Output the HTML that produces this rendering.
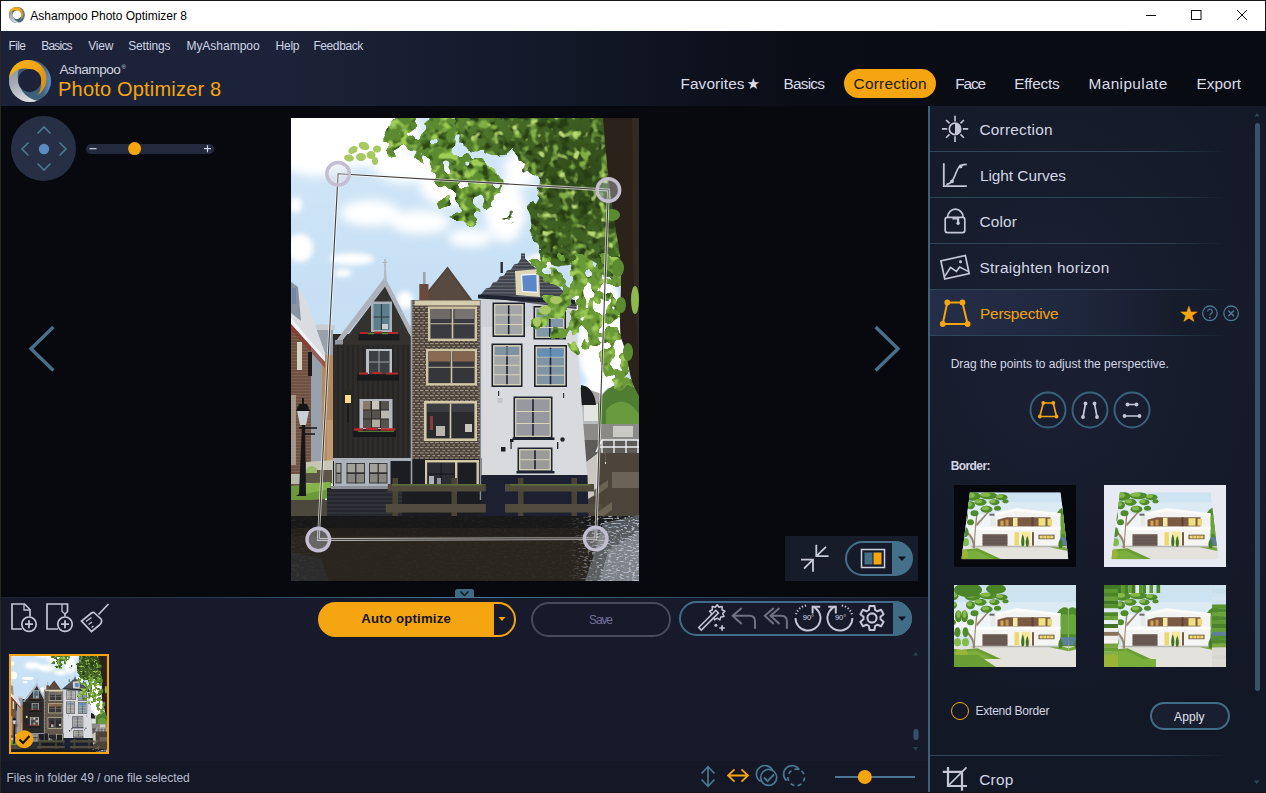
<!DOCTYPE html>
<html lang="en">
<head>
<meta charset="utf-8">
<title>Ashampoo Photo Optimizer 8</title>
<style>
*{box-sizing:border-box;margin:0;padding:0}
html,body{width:1266px;height:793px;overflow:hidden;background:#07090f}
body{font-family:"Liberation Sans","DejaVu Sans",sans-serif;color:#d3d6e4;position:relative}
.abs{position:absolute}
svg{position:absolute;overflow:visible}
.t{position:absolute;white-space:nowrap;line-height:1}
#titlebar{left:0;top:0;width:1266px;height:31px;background:#fff;border-top:1px solid #15161a;border-left:1px solid #15161a;border-right:1px solid #15161a}
#menubar{left:0;top:31px;width:1266px;height:29px;background:linear-gradient(90deg,#1c2338 0,#1c2338 280px,#141a2b 520px,#0b0d16 800px,#090b12 100%)}
#header{left:0;top:60px;width:1266px;height:46px;background:linear-gradient(90deg,#1c2338 0,#1c2338 280px,#141a2b 520px,#0b0d16 800px,#090b12 100%)}
#canvas{left:0;top:106px;width:928px;height:491px;background:#07090f}
#toolbar{left:0;top:597px;width:928px;height:164px;background:#161a2a}
#status{left:0;top:761px;width:928px;height:32px;background:#131726}
#side{left:928px;top:106px;width:338px;height:687px;background:radial-gradient(ellipse 300px 420px at 120px 230px,#1a2033 0,#161b2b 60%,#131827 100%);border-left:2px solid #3d6178}
.sep{position:absolute;left:930px;width:296px;height:1px;background:linear-gradient(90deg,#2c4658 0,#2c4658 75%,rgba(44,70,88,0) 100%)}
</style>
</head>
<body>
<!-- ===== title bar ===== -->
<div id="titlebar" class="abs"></div>
<svg style="left:9px;top:6.8px" width="16" height="16" viewBox="0 0 42 42">
  <defs>
    <linearGradient id="lgGa" x1="0" y1="0" x2="0.4" y2="1"><stop offset="0" stop-color="#7d8390"/><stop offset="0.55" stop-color="#a9adb8"/><stop offset="1" stop-color="#dcdde2"/></linearGradient>
    <linearGradient id="lgOa" x1="0" y1="0" x2="1" y2="0.5"><stop offset="0" stop-color="#fbb414"/><stop offset="0.6" stop-color="#f0a418"/><stop offset="1" stop-color="#d08a1c"/></linearGradient>
    <linearGradient id="lgBa" x1="0" y1="0" x2="1" y2="0"><stop offset="0" stop-color="#38566b"/><stop offset="0.8" stop-color="#3f627c"/><stop offset="1" stop-color="#5f93cc"/></linearGradient>
    <clipPath id="cOa"><circle cx="18.85" cy="18.85" r="18.85"/></clipPath>
    <mask id="mOa"><rect width="42" height="42" fill="#fff"/><circle cx="15.5" cy="25" r="16.5" fill="#000"/></mask>
    <mask id="mGa"><rect width="42" height="42" fill="#fff"/><circle cx="33.5" cy="16.7" r="24.8" fill="#000"/></mask>
  </defs>
  <circle cx="21" cy="21" r="21" fill="url(#lgBa)"/>
  <circle cx="21" cy="21" r="21" fill="url(#lgGa)" mask="url(#mGa)"/>
  <g clip-path="url(#cOa)"><rect width="42" height="42" fill="url(#lgOa)" mask="url(#mOa)"/></g>
  <circle cx="20.7" cy="20.4" r="11.5" fill="#fff"/>
</svg>
<span class="t" style="left:30.3px;top:9.8px;font-size:12px;color:#000;letter-spacing:0.00px;">Ashampoo Photo Optimizer 8</span>
<svg style="left:1140px;top:0" width="126" height="31" viewBox="0 0 126 31" fill="none" stroke="#111" stroke-width="1">
  <path d="M6 15.5h10"/>
  <rect x="51.5" y="10.5" width="9.5" height="9"/>
  <path d="M97 10l10 10M107 10l-10 10"/>
</svg>

<!-- ===== menu bar ===== -->
<div id="menubar" class="abs"></div>
<span class="t" style="left:8.5px;top:39.8px;font-size:12px;color:#cfd3e6;letter-spacing:-0.61px;">File</span>
<span class="t" style="left:41.3px;top:39.8px;font-size:12px;color:#cfd3e6;letter-spacing:-0.81px;">Basics</span>
<span class="t" style="left:88.3px;top:39.8px;font-size:12px;color:#cfd3e6;letter-spacing:-0.23px;">View</span>
<span class="t" style="left:128.2px;top:39.8px;font-size:12px;color:#cfd3e6;letter-spacing:-0.14px;">Settings</span>
<span class="t" style="left:186.4px;top:39.8px;font-size:12px;color:#cfd3e6;letter-spacing:-0.01px;">MyAshampoo</span>
<span class="t" style="left:275.5px;top:39.8px;font-size:12px;color:#cfd3e6;letter-spacing:-0.23px;">Help</span>
<span class="t" style="left:313.4px;top:39.8px;font-size:12px;color:#cfd3e6;letter-spacing:-0.40px;">Feedback</span>

<!-- ===== header ===== -->
<div id="header" class="abs"></div>
<svg style="left:8.85px;top:59.9px" width="42" height="42" viewBox="0 0 42 42">
  <defs>
    <linearGradient id="lgGb" x1="0" y1="0" x2="0.4" y2="1"><stop offset="0" stop-color="#7d8390"/><stop offset="0.55" stop-color="#a9adb8"/><stop offset="1" stop-color="#dcdde2"/></linearGradient>
    <linearGradient id="lgOb" x1="0" y1="0" x2="1" y2="0.5"><stop offset="0" stop-color="#fbb414"/><stop offset="0.6" stop-color="#f0a418"/><stop offset="1" stop-color="#d08a1c"/></linearGradient>
    <linearGradient id="lgBb" x1="0" y1="0" x2="1" y2="0"><stop offset="0" stop-color="#38566b"/><stop offset="0.8" stop-color="#3f627c"/><stop offset="1" stop-color="#5f93cc"/></linearGradient>
    <clipPath id="cOb"><circle cx="18.85" cy="18.85" r="18.85"/></clipPath>
    <mask id="mOb"><rect width="42" height="42" fill="#fff"/><circle cx="15.5" cy="25" r="16.5" fill="#000"/></mask>
    <mask id="mGb"><rect width="42" height="42" fill="#fff"/><circle cx="33.5" cy="16.7" r="24.8" fill="#000"/></mask>
  </defs>
  <circle cx="21" cy="21" r="21" fill="url(#lgBb)"/>
  <circle cx="21" cy="21" r="21" fill="url(#lgGb)" mask="url(#mGb)"/>
  <g clip-path="url(#cOb)"><rect width="42" height="42" fill="url(#lgOb)" mask="url(#mOb)"/></g>
  <circle cx="20.7" cy="20.4" r="11.5" fill="#1c2338"/>
</svg>
<span class="t" style="left:59.4px;top:63.1px;font-size:13.6px;color:#d0d3e0;letter-spacing:-0.51px;">Ashampoo</span>
<span class="t" style="left:121.5px;top:64.4px;font-size:6px;color:#d0d3e0;letter-spacing:0.48px;">®</span>
<span class="t" style="left:58.1px;top:78.9px;font-size:20px;color:#f5a50f;letter-spacing:0.19px;">Photo Optimizer 8</span>
<div class="abs" style="left:844px;top:68.5px;width:92px;height:29.5px;border-radius:15px;background:#f5a50f"></div>
<span class="t" style="left:680.4px;top:75.7px;font-size:15.4px;color:#d9dbe8;letter-spacing:0.11px;">Favorites</span>
<span class="t" style="left:746.4px;top:76.0px;font-size:15.2px;color:#d9dbe8;letter-spacing:0.00px;">★</span>
<span class="t" style="left:783.5px;top:75.7px;font-size:15.4px;color:#d9dbe8;letter-spacing:-0.78px;">Basics</span>
<span class="t" style="left:853.6px;top:75.7px;font-size:15.4px;color:#1b1b22;letter-spacing:0.23px;">Correction</span>
<span class="t" style="left:955.3px;top:75.7px;font-size:15.4px;color:#d9dbe8;letter-spacing:-1.19px;">Face</span>
<span class="t" style="left:1014.2px;top:75.7px;font-size:15.4px;color:#d9dbe8;letter-spacing:-0.19px;">Effects</span>
<span class="t" style="left:1088.5px;top:75.7px;font-size:15.4px;color:#d9dbe8;letter-spacing:0.39px;">Manipulate</span>
<span class="t" style="left:1196.4px;top:75.7px;font-size:15.4px;color:#d9dbe8;letter-spacing:0.05px;">Export</span>
<!-- ===== canvas ===== -->
<div id="canvas" class="abs"></div>
<!-- pan pad -->
<div class="abs" style="left:11px;top:116px;width:65px;height:65px;border-radius:50%;background:#272f44"></div>
<svg style="left:11px;top:116px" width="65" height="65" viewBox="0 0 65 65" fill="none" stroke="#4a7a90" stroke-width="1.6">
  <circle cx="33" cy="33" r="5.2" fill="#5a8cc0" stroke="none"/>
  <path d="M26.5 17.5l6.5-6.5 6.5 6.5"/>
  <path d="M26.5 47.5l6.5 6.5 6.5-6.5"/>
  <path d="M17.5 26.5l-6.5 6.5 6.5 6.5"/>
  <path d="M48.5 26.5l6.5 6.5-6.5 6.5"/>
</svg>
<!-- zoom slider -->
<div class="abs" style="left:86px;top:144px;width:128px;height:9.5px;border-radius:5px;background:#232a3d"></div>
<svg style="left:86px;top:140px" width="130" height="18" viewBox="0 0 130 18">
  <path d="M3.5 8.7h7" stroke="#d0d2de" stroke-width="1.2"/>
  <path d="M118 8.7h7M121.5 5.2v7" stroke="#d0d2de" stroke-width="1.2"/>
  <circle cx="48.6" cy="8.6" r="6.5" fill="#f5a50f"/>
</svg>
<!-- nav arrows -->
<svg style="left:20px;top:320px" width="40" height="58" viewBox="20 320 40 58" fill="none" stroke="#4a6f88" stroke-width="3.4">
  <path d="M53.4 327L31 348.8 53.4 370.5"/>
</svg>
<svg style="left:870px;top:320px" width="40" height="58" viewBox="870 320 40 58" fill="none" stroke="#4a6f88" stroke-width="3.4">
  <path d="M875.6 327L898 348.8 875.6 370.5"/>
</svg>
<!-- PHOTO -->
<svg style="left:291px;top:118px" width="348" height="463" viewBox="291 118 348 463"><defs>
<linearGradient id="psky" x1="0" y1="0" x2="0" y2="1"><stop offset="0" stop-color="#d3e8f8"/><stop offset="0.45" stop-color="#c6dff4"/><stop offset="1" stop-color="#d6e9f7"/></linearGradient>
<filter id="pcl" x="-20%" y="-20%" width="140%" height="140%"><feGaussianBlur stdDeviation="5"/></filter>
<filter id="pcl2" x="-20%" y="-20%" width="140%" height="140%"><feGaussianBlur stdDeviation="2.5"/></filter>
<filter id="plf" x="-10%" y="-10%" width="120%" height="120%" color-interpolation-filters="sRGB">
<feTurbulence type="fractalNoise" baseFrequency="0.075" numOctaves="2" seed="11" result="n"/>
<feDisplacementMap in="SourceGraphic" in2="n" scale="12" xChannelSelector="R" yChannelSelector="G" result="d0"/>
<feTurbulence type="fractalNoise" baseFrequency="0.10" numOctaves="2" seed="4" result="n2"/>
<feGaussianBlur in="d0" stdDeviation="9" result="db"/>
<feColorMatrix in="n" type="matrix" values="0 0 0 0 1  0 0 0 0 1  0 0 0 0 1  0 0 3 0 -1" result="nb"/>
<feComposite in="db" in2="nb" operator="arithmetic" k1="0" k2="2.1" k3="-1.0" k4="0" result="v"/>
<feComponentTransfer in="v" result="msk"><feFuncA type="linear" slope="9" intercept="-3.6"/></feComponentTransfer>
<feComposite in="d0" in2="msk" operator="in" result="d"/>
<feColorMatrix in="n2" type="matrix" values="0 0 0 0 0.50  0 0 0 0 0.68  0 0 0 0 0.27  5 0 0 0 -2.75" result="lt"/>
<feComposite in="lt" in2="d" operator="in" result="ltin"/>
<feColorMatrix in="n2" type="matrix" values="0 0 0 0 0.15  0 0 0 0 0.24  0 0 0 0 0.08  0 5 0 0 -2.45" result="dk"/>
<feComposite in="dk" in2="d" operator="in" result="dkin"/>
<feColorMatrix in="n2" type="matrix" values="0 0 0 0 0.72  0 0 0 0 0.85  0 0 0 0 0.45  0 0 6 0 -3.7" result="hl"/>
<feComposite in="hl" in2="d" operator="in" result="hlin"/>
<feMerge><feMergeNode in="d"/><feMergeNode in="dkin"/><feMergeNode in="ltin"/><feMergeNode in="hlin"/></feMerge>
</filter>
<filter id="plf2" x="-10%" y="-10%" width="120%" height="120%" color-interpolation-filters="sRGB">
<feTurbulence type="fractalNoise" baseFrequency="0.07" numOctaves="2" seed="23" result="n"/>
<feDisplacementMap in="SourceGraphic" in2="n" scale="12" xChannelSelector="R" yChannelSelector="G" result="d0"/>
<feTurbulence type="fractalNoise" baseFrequency="0.10" numOctaves="2" seed="9" result="n2"/>
<feGaussianBlur in="d0" stdDeviation="7" result="db"/>
<feColorMatrix in="n" type="matrix" values="0 0 0 0 1  0 0 0 0 1  0 0 0 0 1  0 0 3 0 -1" result="nb"/>
<feComposite in="db" in2="nb" operator="arithmetic" k1="0" k2="2.1" k3="-2.7" k4="0" result="v"/>
<feComponentTransfer in="v" result="msk"><feFuncA type="linear" slope="9" intercept="-3.6"/></feComponentTransfer>
<feComposite in="d0" in2="msk" operator="in" result="d"/>
<feColorMatrix in="n2" type="matrix" values="0 0 0 0 0.62  0 0 0 0 0.80  0 0 0 0 0.33  5 0 0 0 -2.5" result="lt"/>
<feComposite in="lt" in2="d" operator="in" result="ltin"/>
<feColorMatrix in="n2" type="matrix" values="0 0 0 0 0.22  0 0 0 0 0.36  0 0 0 0 0.10  0 5 0 0 -2.7" result="dk"/>
<feComposite in="dk" in2="d" operator="in" result="dkin"/>
<feMerge><feMergeNode in="d"/><feMergeNode in="dkin"/><feMergeNode in="ltin"/></feMerge>
</filter>
<filter id="plf3" x="-10%" y="-10%" width="120%" height="120%" color-interpolation-filters="sRGB">
<feTurbulence type="fractalNoise" baseFrequency="0.07" numOctaves="2" seed="31" result="n"/>
<feDisplacementMap in="SourceGraphic" in2="n" scale="12" xChannelSelector="R" yChannelSelector="G" result="d0"/>
<feTurbulence type="fractalNoise" baseFrequency="0.10" numOctaves="2" seed="14" result="n2"/>
<feGaussianBlur in="d0" stdDeviation="7" result="db"/>
<feColorMatrix in="n" type="matrix" values="0 0 0 0 1  0 0 0 0 1  0 0 0 0 1  0 0 3 0 -1" result="nb"/>
<feComposite in="db" in2="nb" operator="arithmetic" k1="0" k2="2.1" k3="-2.0" k4="0" result="v"/>
<feComponentTransfer in="v" result="msk"><feFuncA type="linear" slope="9" intercept="-3.6"/></feComponentTransfer>
<feComposite in="d0" in2="msk" operator="in" result="d"/>
<feColorMatrix in="n2" type="matrix" values="0 0 0 0 0.62  0 0 0 0 0.80  0 0 0 0 0.33  5 0 0 0 -2.5" result="lt"/>
<feComposite in="lt" in2="d" operator="in" result="ltin"/>
<feColorMatrix in="n2" type="matrix" values="0 0 0 0 0.17  0 0 0 0 0.28  0 0 0 0 0.08  0 5 0 0 -2.5" result="dk"/>
<feComposite in="dk" in2="d" operator="in" result="dkin"/>
<feMerge><feMergeNode in="d"/><feMergeNode in="dkin"/><feMergeNode in="ltin"/></feMerge>
</filter>
<radialGradient id="pcg" gradientUnits="userSpaceOnUse" cx="585" cy="175" r="190"><stop offset="0" stop-color="#2e471a"/><stop offset="0.5" stop-color="#486e27"/><stop offset="1" stop-color="#6d9a3b"/></radialGradient>
<filter id="pwt" x="0" y="0" width="100%" height="100%" color-interpolation-filters="sRGB">
<feTurbulence type="fractalNoise" baseFrequency="0.25 0.6" numOctaves="2" seed="5" result="n"/>
<feColorMatrix in="n" type="matrix" values="0 0 0 0 0.78  0 0 0 0 0.83  0 0 0 0 0.90  5 0 0 0 -2.6" result="sp"/>
<feComposite in="sp" in2="SourceGraphic" operator="in"/>
</filter>
<linearGradient id="pwg" x1="0" y1="0" x2="1" y2="0"><stop offset="0" stop-color="#fff" stop-opacity="0.07"/><stop offset="0.1" stop-color="#fff" stop-opacity="0.015"/><stop offset="0.8" stop-color="#fff" stop-opacity="0.04"/><stop offset="0.9" stop-color="#fff" stop-opacity="0.8"/><stop offset="1" stop-color="#fff" stop-opacity="1"/></linearGradient>
<pattern id="pbr" width="5" height="5.2" patternUnits="userSpaceOnUse"><rect width="5" height="5.2" fill="#4e4339"/><rect y="0" width="3.600" height="1" fill="#a89f92"/><rect x="2.500" y="2.600" width="3.600" height="1" fill="#a89f92"/><rect x="-1.100" y="2.600" width="1.200" height="1" fill="#a89f92"/></pattern>
<pattern id="pbr2" width="4" height="3" patternUnits="userSpaceOnUse"><rect width="4" height="3" fill="#6f5142"/><rect width="4" height=".7" fill="#866653"/></pattern>
<pattern id="prf" width="4" height="3.4" patternUnits="userSpaceOnUse"><rect width="4" height="3.4" fill="#3f424b"/><rect width="4" height="1" fill="#6d707a"/></pattern>
<clipPath id="pclip"><rect x="291" y="118" width="348" height="463"/></clipPath>
</defs>
<g clip-path="url(#pclip)">
<rect x="291" y="118" width="348" height="400" fill="url(#psky)"/>
<g fill="#fff" filter="url(#pcl)">
<rect x="280" y="105" width="118" height="62"/><ellipse cx="318" cy="150" rx="46" ry="26"/><ellipse cx="385" cy="132" rx="36" ry="24"/>
<ellipse cx="408" cy="168" rx="34" ry="15"/><ellipse cx="450" cy="186" rx="30" ry="20"/>
<ellipse cx="370" cy="213" rx="30" ry="13"/><ellipse cx="420" cy="222" rx="30" ry="12"/>
<ellipse cx="505" cy="212" rx="20" ry="30"/><ellipse cx="520" cy="170" rx="16" ry="18"/><ellipse cx="470" cy="238" rx="22" ry="9"/>
</g>
<g fill="#fff" filter="url(#pcl2)">
<ellipse cx="300" cy="248" rx="13" ry="14"/><ellipse cx="352" cy="259" rx="22" ry="6"/><ellipse cx="343" cy="273" rx="9" ry="4"/><ellipse cx="296" cy="205" rx="6" ry="8"/>
<ellipse cx="405" cy="300" rx="8" ry="9"/><ellipse cx="595" cy="300" rx="24" ry="26"/><ellipse cx="602" cy="345" rx="24" ry="45"/><ellipse cx="598" cy="395" rx="20" ry="14"/><ellipse cx="540" cy="262" rx="14" ry="8"/>
</g>
<rect x="578" y="400" width="61" height="62" fill="#b9bcbc"/>
<path d="M580 398l10-8 12 4 6-6 10 2v16h-38z" fill="#a9a7a4"/>
<path d="M598 404c4-12 12-18 22-20s19 6 19 6v44h-41z" fill="#4f7d31"/>
<path d="M606 410c6-7 14-10 21-7s12 11 12 11v16h-33z" fill="#6a9a3e"/>
<path d="M580 388c4-3 8-2 10 3l-2 10h-8z" fill="#6d9c3e"/>
<rect x="580" y="424" width="59" height="18" fill="#8b8a86"/>
<rect x="584" y="404" width="14" height="17" fill="#e4e4e2"/><rect x="613" y="426" width="20" height="11" fill="#c9c9c6"/>
<path d="M581 385c8 1 14 8 15 20h-15z" fill="#1b1c20"/>
<rect x="580" y="440" width="59" height="22" fill="#5e5c58"/>
<path d="M596 452l6-12h37M602 440v14M614 440v13M626 440v13M638 440v13M598 447h41" stroke="#eef0f2" stroke-width="1.4" fill="none"/>
<path d="M585 462l14-10 6 2v10h34v60h-54z" fill="#4b443a"/>
<path d="M586 462l12-9v40l-10 6z" fill="#c9c7c0"/>
<rect x="606" y="453" width="33" height="30" fill="#4d453b"/><rect x="612" y="472" width="27" height="16" fill="#6b6258"/>
<path d="M291 320l34 40v140h-34z" fill="url(#pbr2)"/>
<path d="M311 329h22v140h-22z" fill="#98a1ab"/><path d="M309 327l10-3 16 1v5h-26z" fill="#c9ced4"/>
<rect x="322" y="355" width="13" height="125" fill="#b28a62"/><rect x="327" y="420" width="8" height="60" fill="#c09a6c"/>
<path d="M291 282l8 6 8 14 18 51v6l-34-40z" fill="#d9dde2"/>
<path d="M291 282l7 5 3 34-10-8z" fill="#8a93a0"/><rect x="292" y="288" width="4" height="16" fill="#6f8aa8"/>
<path d="M291 318l34 40v4l-34-38z" fill="#f1f2f4"/>
<path d="M291 324l34 38v6l-34-38z" fill="#8f2f2a" opacity=".6"/>
<rect x="297" y="342" width="5" height="28" fill="#d9d2c4"/><rect x="308" y="352" width="4" height="24" fill="#1c1a1a"/>
<rect x="291" y="395" width="5" height="70" fill="#b9b2a5" opacity=".7"/>
<path d="M306 462l28-2v24h-28z" fill="#c6c5b6"/><rect x="305" y="470" width="27" height="13" fill="#5b5546"/>
<path d="M306 470c3-5 8-5 11-1v4h-11z" fill="#9db86a"/>
<path d="M291 474h14v10h-14z" fill="#b9b8ac"/>
<path d="M291 486l40-4v16l-40 4z" fill="#6c9a3a"/><path d="M300 484l30-2v7l-30 6z" fill="#86b34a"/>
<rect x="291" y="500" width="37" height="18" fill="#4d483d"/>
<path d="M296 496l3-2 3-70h3l1 72z" fill="#15161a"/><path d="M300 425h6l3-14h-12z" fill="#c9cfd6"/><path d="M296 411h14l-3-7h-8z" fill="#15161a"/><rect x="302" y="398" width="2" height="7" fill="#15161a"/>
<path d="M299 428h18M303 434h12" stroke="#15161a" stroke-width="1.6"/>
<rect x="333" y="458" width="153" height="60" fill="#1c1d21"/>
<rect x="333" y="334" width="78" height="126" fill="#2e2c2a"/>
<path d="M385 277l28.500 56-3 3.500-25.500-50-45 57-4.500-2z" fill="#aeb2bb"/>
<path d="M385 286.500l25.500 50v8h-69.500z" fill="#33322f"/>
<path d="M383.500 281l1-17h1l1.500 17z" fill="#b5b9c1"/><path d="M385 259v8M382.800 262.500h4.400" stroke="#aeb2bb" stroke-width="1.2"/>
<rect x="335" y="340" width="8" height="4.500" fill="#9096a0"/>
<g stroke="#1a1b1d" stroke-width=".8" opacity=".8"><path d="M338 345v112"/><path d="M343 345v112"/><path d="M348 345v112"/><path d="M353 345v112"/><path d="M358 345v112"/><path d="M363 345v112"/><path d="M368 345v112"/><path d="M373 345v112"/><path d="M378 345v112"/><path d="M383 345v112"/><path d="M388 345v112"/><path d="M393 345v112"/><path d="M398 345v112"/><path d="M403 345v112"/><path d="M408 345v112"/></g>
<rect x="371" y="301.500" width="21" height="30.500" fill="#aab0b8"/><rect x="373.500" y="304" width="16" height="26" fill="#5c7f8e"/><path d="M381.500 304v26M373.500 317h16" stroke="#2f3a40" stroke-width="1.200"/><rect x="382" y="324" width="6" height="5" fill="#c9ccd0"/>
<rect x="358.500" y="334" width="41" height="6.500" fill="#1b1c1f"/><path d="M360 333h8M374 332.500h8M388 333h10" stroke="#b3262c" stroke-width="2"/><path d="M368 333.500h6M382 333.500h6" stroke="#5e8a32" stroke-width="1.500"/>
<rect x="366" y="349" width="26" height="25" fill="#b9bec5"/><rect x="369" y="351" width="20.500" height="23" fill="#3c4043"/><path d="M379 351v23M369 362h20" stroke="#9aa0a6" stroke-width="1"/>
<rect x="357" y="374.500" width="42" height="6" fill="#18191b"/><path d="M359 373.500h9M372 373h10M386 373.500h12" stroke="#b3262c" stroke-width="2.200"/>
<rect x="359.500" y="399" width="33" height="30" fill="#b3b8c0"/><rect x="363" y="401" width="26" height="27" fill="#55524e"/>
<rect x="371" y="401" width="8" height="9" fill="#c8c4bc"/><rect x="380" y="410" width="9" height="9" fill="#bdb8ae"/><rect x="371" y="419" width="9" height="8" fill="#b0aca4"/><rect x="363" y="401" width="7" height="9" fill="#8a7a6a"/>
<path d="M371.500 401v27M380.500 401v27M363 410h26M363 419h26" stroke="#2a2a2a" stroke-width="1"/>
<rect x="353" y="431" width="43" height="6" fill="#17181a"/><path d="M354 429.500h9M366 429h12M381 429.500h14" stroke="#b8242c" stroke-width="2.600"/><path d="M358 431.500h36" stroke="#4d7a2b" stroke-width="1.200"/>
<path d="M343.500 392l3-3h2l3 3 1 10-2 2h-6l-2-2z" fill="#2a2622"/><rect x="345" y="395" width="6" height="8" fill="#f7dc90"/><path d="M348 405v18" stroke="#1a1a1a" stroke-width="2"/>
<rect x="333" y="458" width="78" height="3" fill="#aab0b8"/>
<rect x="334" y="461" width="66" height="25" fill="#aeb4bc"/>
<rect x="335.5" y="463" width="6.0" height="20.500" fill="#3b3b3a"/>
<rect x="336.5" y="464" width="4.0" height="8.500" fill="#c6c4bc" opacity=".75"/><rect x="336.5" y="474" width="4.0" height="8.500" fill="#a8a59c" opacity=".7"/>
<rect x="346.5" y="463" width="18.5" height="20.500" fill="#3b3b3a"/>
<rect x="347.5" y="464" width="16.5" height="8.500" fill="#c6c4bc" opacity=".75"/><rect x="347.5" y="474" width="16.5" height="8.500" fill="#a8a59c" opacity=".7"/>
<path d="M355.8 463v20.500M346.5 473h18.5" stroke="#2a2a2a" stroke-width="1.200"/>
<rect x="369.0" y="463" width="18.5" height="20.500" fill="#3b3b3a"/>
<rect x="370.0" y="464" width="16.5" height="8.500" fill="#c6c4bc" opacity=".75"/><rect x="370.0" y="474" width="16.5" height="8.500" fill="#a8a59c" opacity=".7"/>
<path d="M378.2 463v20.500M369.0 473h18.5" stroke="#2a2a2a" stroke-width="1.200"/>
<rect x="390.500" y="461" width="20.500" height="25" fill="#1c1d22"/>
<path d="M327 488h75v30h-75z" fill="#26282e"/><path d="M331 486h70v3h-70z" fill="#8a8f98"/>
<g stroke="#3a3d44" stroke-width="1"><path d="M327 493h75"/><path d="M327 497h75"/><path d="M327 501h75"/><path d="M327 505h75"/><path d="M327 509h75"/><path d="M327 513h75"/><path d="M327 517h75"/></g>
<rect x="411.500" y="300" width="69" height="160" fill="url(#pbr)"/>
<path d="M420 300.500l27.600-34 25 34z" fill="#51443b"/><path d="M423 300l24.600-30 22 30z" fill="#5d4e44" opacity=".6"/>
<rect x="419.300" y="284" width="9.200" height="16.500" fill="#6a4a3a"/><rect x="423" y="272" width="2.600" height="12" fill="#a0a4aa"/>
<rect x="414.500" y="300.500" width="66" height="5" fill="#d6ccb0"/>
<rect x="428.0" y="306.5" width="49.0" height="34.5" fill="#cfc5a5"/><rect x="429.2" y="307.7" width="46.6" height="32.1" fill="#cfc5a5"/><rect x="430.4" y="308.9" width="44.2" height="29.7" fill="#3a3b40"/><rect x="451.7" y="308.9" width="1.6" height="29.7" fill="#cfc5a5"/><rect x="430.4" y="323.3" width="44.2" height="0.9" fill="#cfc5a5"/>
<rect x="430.500" y="309" width="20" height="10" fill="#6e6a68"/><rect x="454.500" y="309" width="20" height="10" fill="#777370"/>
<rect x="426.0" y="349.0" width="51.0" height="36.5" fill="#cfc5a5"/><rect x="427.2" y="350.2" width="48.6" height="34.1" fill="#cfc5a5"/><rect x="428.4" y="351.4" width="46.2" height="31.7" fill="#35363a"/><rect x="450.7" y="351.4" width="1.6" height="31.7" fill="#cfc5a5"/><rect x="428.4" y="366.8" width="46.2" height="0.9" fill="#cfc5a5"/>
<rect x="428.500" y="351.500" width="21.500" height="10" fill="#8a6a52"/><rect x="453" y="351.500" width="21.500" height="10" fill="#83644e"/>
<rect x="424.0" y="401.0" width="53.0" height="40.0" fill="#d3c9a8"/><rect x="425.4" y="402.4" width="50.2" height="37.2" fill="#d3c9a8"/><rect x="426.6" y="403.6" width="47.8" height="34.8" fill="#2a2b2f"/><rect x="449.7" y="403.6" width="1.6" height="34.8" fill="#d3c9a8"/>
<rect x="427" y="404" width="22" height="8" fill="#3b3c42"/><rect x="452" y="404" width="22" height="8" fill="#3b3c42"/><rect x="436" y="426" width="9" height="10" fill="#b9b6ae"/><rect x="465" y="424" width="7" height="8" fill="#c9c6be"/><rect x="430" y="416" width="3" height="14" fill="#8a3a3a"/>
<rect x="411.500" y="459" width="69" height="28" fill="#1d1e22"/>
<rect x="425" y="460" width="54" height="2.500" fill="#d3c9a8"/><rect x="425" y="460" width="2.200" height="27" fill="#d3c9a8"/><rect x="455" y="460" width="2.400" height="40" fill="#d3c9a8"/><rect x="476.500" y="460" width="2.400" height="40" fill="#d3c9a8"/><rect x="455" y="497" width="24" height="3" fill="#d3c9a8"/>
<rect x="428" y="463" width="26" height="22" fill="#2b2d33"/><path d="M441 463v22M428 474h26" stroke="#15161a" stroke-width="1"/><rect x="429" y="476" width="5" height="8" fill="#aeb2b8"/><rect x="437" y="478" width="4" height="6" fill="#8f949c"/>
<rect x="411.500" y="487" width="69" height="30" fill="#1b1c20"/>
<path d="M411.500 300v188" stroke="#9ea2aa" stroke-width="1.600"/><path d="M480.500 300v200" stroke="#8a8e96" stroke-width="1.500"/>
<path d="M481.500 297h93.500l4 73 8.500 106h-106z" fill="#d9dade"/>
<path d="M481.500 297h93.500l1.500 30h-95z" fill="#cfd1d8"/>
<path d="M479 296.500l7-8 4-1 3-5 4-1 3-5 4-1 3-5 4-1 3-5 4-1 3-5 0-5h4l0 5 24 22 4 1 24 22-.5 5.500z" fill="url(#prf)"/>
<path d="M478 294.500l97 5.500v4l-97-5.500z" fill="#1d2230"/>
<rect x="500.500" y="262" width="2.400" height="11" fill="#2a2c33"/>
<path d="M515 271l24-2 1 28-24-2z" fill="#ddd6b6"/><path d="M521.500 275l15.500-1 .5 18.500-15-1z" fill="#5b86c8"/><path d="M521.500 275l15.500-1 .5 18.500-15-1z" fill="none" stroke="#eef0f4" stroke-width="1.300"/>
<rect x="492.5" y="302.5" width="32.5" height="34.5" fill="#1d2230"/><rect x="494.1" y="304.1" width="29.3" height="31.3" fill="#e2dbbd"/><rect x="495.3" y="305.3" width="26.9" height="28.9" fill="#a3a5a6"/><rect x="507.9" y="305.3" width="1.6" height="28.9" fill="#1d2230"/><rect x="495.3" y="314.5" width="26.9" height="0.9" fill="#e2dbbd"/><rect x="495.3" y="324.1" width="26.9" height="0.9" fill="#e2dbbd"/>
<rect x="533.5" y="306.0" width="32.5" height="33.5" fill="#1d2230"/><rect x="535.1" y="307.6" width="29.3" height="30.3" fill="#e2dbbd"/><rect x="536.3" y="308.8" width="26.9" height="27.9" fill="#8098a8"/><rect x="549.0" y="308.8" width="1.6" height="27.9" fill="#1d2230"/><rect x="536.3" y="317.7" width="26.9" height="0.9" fill="#e2dbbd"/><rect x="536.3" y="327.0" width="26.9" height="0.9" fill="#e2dbbd"/>
<rect x="491.5" y="343.5" width="31.0" height="43.5" fill="#1d2230"/><rect x="493.1" y="345.1" width="27.8" height="40.3" fill="#e2dbbd"/><rect x="494.3" y="346.3" width="25.4" height="37.9" fill="#a3a5a6"/><rect x="506.2" y="346.3" width="1.6" height="37.9" fill="#1d2230"/><rect x="494.3" y="355.3" width="25.4" height="0.9" fill="#e2dbbd"/><rect x="494.3" y="364.8" width="25.4" height="0.9" fill="#e2dbbd"/><rect x="494.3" y="374.3" width="25.4" height="0.9" fill="#e2dbbd"/>
<rect x="534.0" y="345.0" width="33.0" height="42.0" fill="#1d2230"/><rect x="535.6" y="346.6" width="29.8" height="38.8" fill="#e2dbbd"/><rect x="536.8" y="347.8" width="27.4" height="36.4" fill="#7f95a6"/><rect x="549.7" y="347.8" width="1.6" height="36.4" fill="#1d2230"/><rect x="536.8" y="356.5" width="27.4" height="0.9" fill="#e2dbbd"/><rect x="536.8" y="365.6" width="27.4" height="0.9" fill="#e2dbbd"/><rect x="536.8" y="374.7" width="27.4" height="0.9" fill="#e2dbbd"/>
<rect x="495" y="347" width="24" height="8" fill="#6d8aa2" opacity=".7"/><rect x="538" y="349" width="25" height="8" fill="#5b8dc0" opacity=".7"/>
<rect x="513.5" y="396.5" width="39.0" height="42.0" fill="#1d2230"/><rect x="515.1" y="398.1" width="35.8" height="38.8" fill="#e2dbbd"/><rect x="516.3" y="399.3" width="33.4" height="36.4" fill="#97999e"/><rect x="532.2" y="399.3" width="1.6" height="36.4" fill="#1d2230"/><rect x="516.3" y="411.0" width="33.4" height="0.9" fill="#e2dbbd"/><rect x="516.3" y="423.1" width="33.4" height="0.9" fill="#e2dbbd"/>
<rect x="517.5" y="447.5" width="35.0" height="24.5" fill="#1d2230"/><rect x="519.1" y="449.1" width="31.8" height="21.3" fill="#e2dbbd"/><rect x="520.3" y="450.3" width="29.4" height="18.9" fill="#9a9a98"/><rect x="534.2" y="450.3" width="1.6" height="18.9" fill="#1d2230"/><rect x="520.3" y="459.3" width="29.4" height="0.9" fill="#e2dbbd"/>
<rect x="512.500" y="437.500" width="42" height="2.500" fill="#1d2230"/><rect x="516.500" y="471" width="38" height="2.500" fill="#1d2230"/>
<rect x="501" y="447" width="4.500" height="4.500" fill="#1d1e22"/><rect x="510" y="439" width="3.500" height="3" fill="#1d1e22"/><rect x="510.500" y="441" width="1.200" height="8" fill="#1d1e22"/><circle cx="562.500" cy="439.500" r="2.200" fill="#22242a"/><rect x="557" y="442" width="1.300" height="7" fill="#1d1e22"/>
<rect x="498" y="391" width="1.200" height="5" fill="#333"/><rect x="563" y="393" width="1.200" height="5" fill="#333"/><rect x="497.500" y="398" width="5" height="5" fill="#c2c4c8"/>
<path d="M481.500 475h106l1 43h-107z" fill="#1c2030"/>
<g fill="#4a4437">
<rect x="392.5" y="478" width="5.500" height="40" />
<rect x="451.5" y="478" width="5.500" height="40" />
<rect x="518.0" y="478" width="5.500" height="40" />
<rect x="571.5" y="478" width="5.500" height="40" />
<rect x="600" y="478" width="6" height="38"/>
</g>
<rect x="387.800" y="484" width="98" height="7.500" fill="#4f4a3b"/><rect x="505" y="484" width="89" height="7.500" fill="#4f4a3b"/>
<path d="M392 484.800h90M510 484.800h80" stroke="#5e7a3a" stroke-width="1.400" opacity=".8"/>
<rect x="385.800" y="504" width="100" height="8.500" fill="#514c3d"/><rect x="505" y="504" width="97" height="8.500" fill="#514c3d"/>
<path d="M594 490l14-10v7l-14 10zM598 512l14-10v8l-14 10z" fill="#6b6455"/>
<rect x="291" y="516" width="348" height="66" fill="#231f1a"/>
<rect x="291" y="516" width="348" height="12" fill="#17171a" opacity=".7"/>
<rect x="291" y="536" width="348" height="45" fill="#2c2720" opacity=".8"/>
<path d="M291 552l30 6 8 23h-38z" fill="#30343c" opacity=".5"/>
<rect x="291" y="516" width="348" height="66" fill="url(#pwg)" filter="url(#pwt)"/>
<path d="M585 581l10-30 8-28 36-8v66z" fill="#9aa4b0" opacity=".45"/>
<path d="M600 581l8-30 31-20v50z" fill="#c3cbd6" opacity=".35"/>
<g filter="url(#plf)" fill="url(#pcg)">
<path d="M455 112L450 140 470 150 497 158 515 150 522 170 539 180 536 200 524 210 527 231 540 250 532 262 560 268 590 262 610 285 645 290 645 112z"/>
<ellipse cx="505" cy="214" rx="9" ry="5"/><ellipse cx="513" cy="226" rx="6" ry="5"/>
</g>
<g filter="url(#plf3)" fill="#5b8a31">
<path d="M406 110L390 126 382 140 386 160 406 154 427 166 436 192 445 217 466 229 480 227 486 211 498 202 505 183 499 160 475 155 455 145 462 110z"/>
</g>
<g filter="url(#plf2)" fill="#6a9a38">
<path d="M524 252L542 279 552 290 536 300 531 322 545 336 565 342 572 352 585 360 597 364 600 384 612 390 645 392 645 252z"/>
</g>
<g fill="#a8c862"><ellipse cx="353" cy="150" rx="5" ry="3.500" transform="rotate(-30 353 150)"/><ellipse cx="364" cy="146" rx="5.500" ry="4" transform="rotate(20 364 146)"/><ellipse cx="349" cy="158" rx="5" ry="3.500" transform="rotate(10 349 158)"/><ellipse cx="361" cy="157" rx="5" ry="4"/><ellipse cx="371" cy="155" rx="4.500" ry="4"/><ellipse cx="377" cy="149" rx="4" ry="3.500"/><ellipse cx="375" cy="161" rx="3" ry="4"/><ellipse cx="545" cy="310" rx="6" ry="4.500"/><ellipse cx="537" cy="322" rx="4" ry="5"/><ellipse cx="556" cy="300" rx="6" ry="4"/></g>
<path d="M603 118h36v278c-3-6-5-8-8-18-3-12-4-26-10-40-3-20 2-50-1-82-2-22-9-38-17-138z" fill="#2a221b"/>
<path d="M622 118h10c2 60-2 120 4 200l3 40v-240z" fill="#3a3026" opacity=".6"/>
<g fill="#5b8a30"><ellipse cx="612" cy="215" rx="8" ry="6"/><ellipse cx="618" cy="268" rx="6" ry="9"/><ellipse cx="621" cy="305" rx="5" ry="8"/><ellipse cx="628" cy="352" rx="5" ry="9"/><ellipse cx="635" cy="300" rx="4" ry="14" fill="#8fb84e"/></g>
</g><path d="M338.1 173.8L608.4 190.0L595.7 538.6L318.3 539.5Z" fill="none" stroke="#fff" stroke-opacity=".7" stroke-width="2.800"/><path d="M338.1 173.8L608.4 190.0L595.7 538.6L318.3 539.5Z" fill="none" stroke="#3f3c3a" stroke-width="1.100"/><circle cx="338.1" cy="173.8" r="11.300" fill="#d9dde8" fill-opacity=".35" stroke="#c3bed1" stroke-width="3.400"/><circle cx="608.4" cy="190.0" r="11.300" fill="#d9dde8" fill-opacity=".35" stroke="#c3bed1" stroke-width="3.400"/><circle cx="595.7" cy="538.6" r="11.300" fill="#d9dde8" fill-opacity=".35" stroke="#c3bed1" stroke-width="3.400"/><circle cx="318.3" cy="539.5" r="11.300" fill="#d9dde8" fill-opacity=".35" stroke="#c3bed1" stroke-width="3.400"/></svg>
<!-- canvas bottom-right controls -->
<div class="abs" style="left:785px;top:536px;width:133px;height:45px;background:#171c2b"></div>
<svg style="left:785px;top:536px" width="133" height="45" viewBox="785 536 133 45" fill="none">
  <g stroke="#c9cad9" stroke-width="1.8">
    <path d="M816.3 544.7V556.2H828.6M816.3 556.2L826 546.8"/>
    <path d="M801 559.7H813V571.7M813 559.7L804 568.6"/>
  </g>
  <rect x="846" y="542" width="66" height="33" rx="16.5" fill="#161b2b" stroke="#44708a" stroke-width="2"/>
  <path d="M892 542h3.500a16.500 16.500 0 0 1 0 33H892z" fill="#44708a"/>
  <rect x="861.500" y="549.500" width="23" height="18" fill="none" stroke="#d0d1de" stroke-width="1.500"/>
  <rect x="864.500" y="552.500" width="8" height="12" fill="#44708a"/>
  <rect x="873.500" y="552.500" width="8" height="12" fill="#f5a50f"/>
  <path d="M898 556.500h8l-4 4.500z" fill="#10131f"/>
</svg>
<!-- collapse tab -->
<svg style="left:455px;top:589px" width="19" height="9" viewBox="0 0 19 9">
  <path d="M0 9V2.500Q0 0 2.500 0h14Q19 0 19 2.500V9z" fill="#3f6a84"/>
  <path d="M5.500 2.500l4 4 4-4" fill="none" stroke="#0d1018" stroke-width="1.300"/>
</svg>
<!-- ===== bottom toolbar / strip / status ===== -->
<div id="toolbar" class="abs"></div>
<div class="abs" style="left:0;top:597px;width:928px;height:1px;background:linear-gradient(90deg,#1b2132 0,#2a4254 25%,#4a7590 50%,#2f4b5f 75%,#1d2638 100%)"></div>
<div id="status" class="abs"></div>
<!-- left tool icons -->
<svg style="left:8px;top:600px" width="104" height="36" viewBox="8 600 104 36" fill="none" stroke="#c5c6d8" stroke-width="1.7">
  <path d="M22 629H12V604h12.500l5.500 5.500V616.500"/>
  <path d="M24 604.500v5.500h5.500" stroke-width="1.300"/>
  <circle cx="29" cy="624.200" r="7.200"/>
  <path d="M25 624.200h8M29 620.200v8" stroke-width="1.800"/>
  <path d="M58 629H47V604h20.500v7.500l-2.500 2.500v2.500"/>
  <path d="M62 604v7.500l3 2.500" stroke-width="1.300"/>
  <circle cx="65" cy="624.200" r="7.200"/>
  <path d="M61 624.200h8M65 620.200v8" stroke-width="1.800"/>
  <path d="M108.500 604L98.500 614.500"/>
  <path d="M94 612.500l7 6.500c1.500 2 .5 4-1.500 6l-8 6.500L81.500 621l10-8c1-.8 1.700-.9 2.500-.5z"/>
  <path d="M86 621.500l5.500-4M88.500 624.500l3.500-2.500M91.500 627.500l2-1.500" stroke-width="1.400"/>
</svg>
<!-- auto optimize -->
<div class="abs" style="left:318px;top:602px;width:198px;height:35px;border-radius:17.500px;background:#f5a50f"></div>
<svg style="left:490px;top:601px" width="26" height="36" viewBox="490 601 26 36">
  <path d="M494 604h4.500a15.500 15.500 0 0 1 0 31H494z" fill="#161a2a"/>
  <path d="M498.500 617h7l-3.500 4z" fill="#f5a50f"/>
</svg>
<span class="t" style="left:361.2px;top:612.1px;font-size:13.2px;color:#15151c;letter-spacing:0.21px;font-weight:bold;">Auto optimize</span>
<!-- save -->
<div class="abs" style="left:531px;top:602px;width:140px;height:34.500px;border-radius:17.500px;border:2px solid #474c5a"></div>
<span class="t" style="left:589.0px;top:614.4px;font-size:12px;color:#736f9c;letter-spacing:-1.12px;">Save</span>
<!-- tools pill -->
<div class="abs" style="left:679px;top:601px;width:233px;height:35px;border-radius:17.500px;border:2px solid #416c85;background:#161a2a"></div>
<svg style="left:679px;top:601px" width="233" height="35" viewBox="679 601 233 35" fill="none" stroke="#c5c6d8" stroke-width="1.700">
  <path d="M893 601h1.500a17.500 17.500 0 0 1 0 35H893z" fill="#416c85" stroke="none"/>
  <path d="M898 616.500h8l-4 4.500z" fill="#10131f" stroke="none"/>
  <!-- wand -->
  <path d="M717.2 604.8L719.1 607.3L722.2 606.6L722.0 609.8L724.9 611.2L722.7 613.6L724.0 616.5L720.8 616.9L719.9 619.9L717.2 618.2L714.5 619.9L713.6 616.9L710.4 616.5L711.7 613.6L709.5 611.2L712.4 609.8L712.2 606.6L715.3 607.3Z" stroke-width="1.500" stroke-linejoin="round"/>
  <path d="M698.700 627.500l2.600 2.600 17.200-17.200-2.600-2.600z" stroke-width="1.500" fill="#161a2a"/>
  <path d="M719.300 628h5.600M722.100 625.200v5.600" stroke-width="1.700"/>
  <circle cx="715.900" cy="625.200" r="1.500" fill="#c5c6d8" stroke="none"/>
  <!-- undo -->
  <g stroke="#6e7282" stroke-width="2">
  <path d="M741.700 608l-9 7.800 9 8.200M733 615.800H749.500q5.500 0 5.500 5.500v7.500"/>
  <path d="M773.800 608l-9 7.800 9 8.200M779.500 608l-9 7.800 9 8.200M771 615.800h10.400q5.500 0 5.500 5.500v7.500"/>
  </g>
  <!-- rotate left -->
  <path d="M820.200 606.800H812.600V613.400" stroke-width="2"/>
  <path d="M795.500 618a12.500 12.500 0 1 0 17-11.600" stroke-width="1.900"/>
  <path d="M796 614.300a12.500 12.500 0 0 1 11.600-9" stroke-dasharray="1.300 1.900" stroke-width="2"/>
  <!-- rotate right -->
  <path d="M828.200 606.800H835.800V613.400" stroke-width="2"/>
  <path d="M852.400 618a12.500 12.500 0 1 1 -17-11.600" stroke-width="1.900"/>
  <path d="M851.900 614.300a12.500 12.500 0 0 0 -11.600-9" stroke-dasharray="1.300 1.900" stroke-width="2"/>
  <!-- gear -->
  <circle cx="872" cy="618" r="4.600" stroke-width="2.100"/>
  <path d="M868.9 610.0L869.5 606.1L874.5 606.1L875.1 610.0L877.4 611.3L881.1 609.8L883.6 614.2L880.5 616.7L880.5 619.3L883.6 621.8L881.1 626.2L877.4 624.7L875.1 626.0L874.5 629.9L869.5 629.9L868.9 626.0L866.6 624.7L862.9 626.2L860.4 621.8L863.5 619.3L863.5 616.7L860.4 614.2L862.9 609.8L866.6 611.3Z" stroke-width="2" stroke-linejoin="round"/>
</svg>
<span class="t" style="left:802.8px;top:614.4px;font-size:7.6px;color:#d5d6e4;letter-spacing:-0.11px;">90°</span>
<span class="t" style="left:835.0px;top:614.4px;font-size:7.6px;color:#d5d6e4;letter-spacing:-0.11px;">90°</span>
<!-- thumbnail -->
<div class="abs" style="left:9px;top:654px;width:100px;height:100px;background:#f5a50f"></div>
<svg style="left:11px;top:656px;overflow:hidden" width="96" height="96" viewBox="291 178 348 348"><defs>
<linearGradient id="qsky" x1="0" y1="0" x2="0" y2="1"><stop offset="0" stop-color="#d3e8f8"/><stop offset="0.45" stop-color="#c6dff4"/><stop offset="1" stop-color="#d6e9f7"/></linearGradient>
<filter id="qcl" x="-20%" y="-20%" width="140%" height="140%"><feGaussianBlur stdDeviation="5"/></filter>
<filter id="qcl2" x="-20%" y="-20%" width="140%" height="140%"><feGaussianBlur stdDeviation="2.5"/></filter>
<filter id="qlf" x="-10%" y="-10%" width="120%" height="120%" color-interpolation-filters="sRGB">
<feTurbulence type="fractalNoise" baseFrequency="0.075" numOctaves="2" seed="11" result="n"/>
<feDisplacementMap in="SourceGraphic" in2="n" scale="12" xChannelSelector="R" yChannelSelector="G" result="d0"/>
<feTurbulence type="fractalNoise" baseFrequency="0.10" numOctaves="2" seed="4" result="n2"/>
<feGaussianBlur in="d0" stdDeviation="9" result="db"/>
<feColorMatrix in="n" type="matrix" values="0 0 0 0 1  0 0 0 0 1  0 0 0 0 1  0 0 3 0 -1" result="nb"/>
<feComposite in="db" in2="nb" operator="arithmetic" k1="0" k2="2.1" k3="-1.0" k4="0" result="v"/>
<feComponentTransfer in="v" result="msk"><feFuncA type="linear" slope="9" intercept="-3.6"/></feComponentTransfer>
<feComposite in="d0" in2="msk" operator="in" result="d"/>
<feColorMatrix in="n2" type="matrix" values="0 0 0 0 0.50  0 0 0 0 0.68  0 0 0 0 0.27  5 0 0 0 -2.75" result="lt"/>
<feComposite in="lt" in2="d" operator="in" result="ltin"/>
<feColorMatrix in="n2" type="matrix" values="0 0 0 0 0.15  0 0 0 0 0.24  0 0 0 0 0.08  0 5 0 0 -2.45" result="dk"/>
<feComposite in="dk" in2="d" operator="in" result="dkin"/>
<feColorMatrix in="n2" type="matrix" values="0 0 0 0 0.72  0 0 0 0 0.85  0 0 0 0 0.45  0 0 6 0 -3.7" result="hl"/>
<feComposite in="hl" in2="d" operator="in" result="hlin"/>
<feMerge><feMergeNode in="d"/><feMergeNode in="dkin"/><feMergeNode in="ltin"/><feMergeNode in="hlin"/></feMerge>
</filter>
<filter id="qlf2" x="-10%" y="-10%" width="120%" height="120%" color-interpolation-filters="sRGB">
<feTurbulence type="fractalNoise" baseFrequency="0.07" numOctaves="2" seed="23" result="n"/>
<feDisplacementMap in="SourceGraphic" in2="n" scale="12" xChannelSelector="R" yChannelSelector="G" result="d0"/>
<feTurbulence type="fractalNoise" baseFrequency="0.10" numOctaves="2" seed="9" result="n2"/>
<feGaussianBlur in="d0" stdDeviation="7" result="db"/>
<feColorMatrix in="n" type="matrix" values="0 0 0 0 1  0 0 0 0 1  0 0 0 0 1  0 0 3 0 -1" result="nb"/>
<feComposite in="db" in2="nb" operator="arithmetic" k1="0" k2="2.1" k3="-2.7" k4="0" result="v"/>
<feComponentTransfer in="v" result="msk"><feFuncA type="linear" slope="9" intercept="-3.6"/></feComponentTransfer>
<feComposite in="d0" in2="msk" operator="in" result="d"/>
<feColorMatrix in="n2" type="matrix" values="0 0 0 0 0.62  0 0 0 0 0.80  0 0 0 0 0.33  5 0 0 0 -2.5" result="lt"/>
<feComposite in="lt" in2="d" operator="in" result="ltin"/>
<feColorMatrix in="n2" type="matrix" values="0 0 0 0 0.22  0 0 0 0 0.36  0 0 0 0 0.10  0 5 0 0 -2.7" result="dk"/>
<feComposite in="dk" in2="d" operator="in" result="dkin"/>
<feMerge><feMergeNode in="d"/><feMergeNode in="dkin"/><feMergeNode in="ltin"/></feMerge>
</filter>
<filter id="qlf3" x="-10%" y="-10%" width="120%" height="120%" color-interpolation-filters="sRGB">
<feTurbulence type="fractalNoise" baseFrequency="0.07" numOctaves="2" seed="31" result="n"/>
<feDisplacementMap in="SourceGraphic" in2="n" scale="12" xChannelSelector="R" yChannelSelector="G" result="d0"/>
<feTurbulence type="fractalNoise" baseFrequency="0.10" numOctaves="2" seed="14" result="n2"/>
<feGaussianBlur in="d0" stdDeviation="7" result="db"/>
<feColorMatrix in="n" type="matrix" values="0 0 0 0 1  0 0 0 0 1  0 0 0 0 1  0 0 3 0 -1" result="nb"/>
<feComposite in="db" in2="nb" operator="arithmetic" k1="0" k2="2.1" k3="-2.0" k4="0" result="v"/>
<feComponentTransfer in="v" result="msk"><feFuncA type="linear" slope="9" intercept="-3.6"/></feComponentTransfer>
<feComposite in="d0" in2="msk" operator="in" result="d"/>
<feColorMatrix in="n2" type="matrix" values="0 0 0 0 0.62  0 0 0 0 0.80  0 0 0 0 0.33  5 0 0 0 -2.5" result="lt"/>
<feComposite in="lt" in2="d" operator="in" result="ltin"/>
<feColorMatrix in="n2" type="matrix" values="0 0 0 0 0.17  0 0 0 0 0.28  0 0 0 0 0.08  0 5 0 0 -2.5" result="dk"/>
<feComposite in="dk" in2="d" operator="in" result="dkin"/>
<feMerge><feMergeNode in="d"/><feMergeNode in="dkin"/><feMergeNode in="ltin"/></feMerge>
</filter>
<radialGradient id="qcg" gradientUnits="userSpaceOnUse" cx="585" cy="175" r="190"><stop offset="0" stop-color="#2e471a"/><stop offset="0.5" stop-color="#486e27"/><stop offset="1" stop-color="#6d9a3b"/></radialGradient>
<filter id="qwt" x="0" y="0" width="100%" height="100%" color-interpolation-filters="sRGB">
<feTurbulence type="fractalNoise" baseFrequency="0.25 0.6" numOctaves="2" seed="5" result="n"/>
<feColorMatrix in="n" type="matrix" values="0 0 0 0 0.78  0 0 0 0 0.83  0 0 0 0 0.90  5 0 0 0 -2.6" result="sp"/>
<feComposite in="sp" in2="SourceGraphic" operator="in"/>
</filter>
<linearGradient id="qwg" x1="0" y1="0" x2="1" y2="0"><stop offset="0" stop-color="#fff" stop-opacity="0.07"/><stop offset="0.1" stop-color="#fff" stop-opacity="0.015"/><stop offset="0.8" stop-color="#fff" stop-opacity="0.04"/><stop offset="0.9" stop-color="#fff" stop-opacity="0.8"/><stop offset="1" stop-color="#fff" stop-opacity="1"/></linearGradient>
<pattern id="qbr" width="5" height="5.2" patternUnits="userSpaceOnUse"><rect width="5" height="5.2" fill="#4e4339"/><rect y="0" width="3.600" height="1" fill="#a89f92"/><rect x="2.500" y="2.600" width="3.600" height="1" fill="#a89f92"/><rect x="-1.100" y="2.600" width="1.200" height="1" fill="#a89f92"/></pattern>
<pattern id="qbr2" width="4" height="3" patternUnits="userSpaceOnUse"><rect width="4" height="3" fill="#6f5142"/><rect width="4" height=".7" fill="#866653"/></pattern>
<pattern id="qrf" width="4" height="3.4" patternUnits="userSpaceOnUse"><rect width="4" height="3.4" fill="#3f424b"/><rect width="4" height="1" fill="#6d707a"/></pattern>
<clipPath id="qclip"><rect x="291" y="118" width="348" height="463"/></clipPath>
</defs>
<g clip-path="url(#qclip)">
<rect x="291" y="118" width="348" height="400" fill="url(#qsky)"/>
<g fill="#fff" filter="url(#qcl)">
<rect x="280" y="105" width="118" height="62"/><ellipse cx="318" cy="150" rx="46" ry="26"/><ellipse cx="385" cy="132" rx="36" ry="24"/>
<ellipse cx="408" cy="168" rx="34" ry="15"/><ellipse cx="450" cy="186" rx="30" ry="20"/>
<ellipse cx="370" cy="213" rx="30" ry="13"/><ellipse cx="420" cy="222" rx="30" ry="12"/>
<ellipse cx="505" cy="212" rx="20" ry="30"/><ellipse cx="520" cy="170" rx="16" ry="18"/><ellipse cx="470" cy="238" rx="22" ry="9"/>
</g>
<g fill="#fff" filter="url(#qcl2)">
<ellipse cx="300" cy="248" rx="13" ry="14"/><ellipse cx="352" cy="259" rx="22" ry="6"/><ellipse cx="343" cy="273" rx="9" ry="4"/><ellipse cx="296" cy="205" rx="6" ry="8"/>
<ellipse cx="405" cy="300" rx="8" ry="9"/><ellipse cx="595" cy="300" rx="24" ry="26"/><ellipse cx="602" cy="345" rx="24" ry="45"/><ellipse cx="598" cy="395" rx="20" ry="14"/><ellipse cx="540" cy="262" rx="14" ry="8"/>
</g>
<rect x="578" y="400" width="61" height="62" fill="#b9bcbc"/>
<path d="M580 398l10-8 12 4 6-6 10 2v16h-38z" fill="#a9a7a4"/>
<path d="M598 404c4-12 12-18 22-20s19 6 19 6v44h-41z" fill="#4f7d31"/>
<path d="M606 410c6-7 14-10 21-7s12 11 12 11v16h-33z" fill="#6a9a3e"/>
<path d="M580 388c4-3 8-2 10 3l-2 10h-8z" fill="#6d9c3e"/>
<rect x="580" y="424" width="59" height="18" fill="#8b8a86"/>
<rect x="584" y="404" width="14" height="17" fill="#e4e4e2"/><rect x="613" y="426" width="20" height="11" fill="#c9c9c6"/>
<path d="M581 385c8 1 14 8 15 20h-15z" fill="#1b1c20"/>
<rect x="580" y="440" width="59" height="22" fill="#5e5c58"/>
<path d="M596 452l6-12h37M602 440v14M614 440v13M626 440v13M638 440v13M598 447h41" stroke="#eef0f2" stroke-width="1.4" fill="none"/>
<path d="M585 462l14-10 6 2v10h34v60h-54z" fill="#4b443a"/>
<path d="M586 462l12-9v40l-10 6z" fill="#c9c7c0"/>
<rect x="606" y="453" width="33" height="30" fill="#4d453b"/><rect x="612" y="472" width="27" height="16" fill="#6b6258"/>
<path d="M291 320l34 40v140h-34z" fill="url(#qbr2)"/>
<path d="M311 329h22v140h-22z" fill="#98a1ab"/><path d="M309 327l10-3 16 1v5h-26z" fill="#c9ced4"/>
<rect x="322" y="355" width="13" height="125" fill="#b28a62"/><rect x="327" y="420" width="8" height="60" fill="#c09a6c"/>
<path d="M291 282l8 6 8 14 18 51v6l-34-40z" fill="#d9dde2"/>
<path d="M291 282l7 5 3 34-10-8z" fill="#8a93a0"/><rect x="292" y="288" width="4" height="16" fill="#6f8aa8"/>
<path d="M291 318l34 40v4l-34-38z" fill="#f1f2f4"/>
<path d="M291 324l34 38v6l-34-38z" fill="#8f2f2a" opacity=".6"/>
<rect x="297" y="342" width="5" height="28" fill="#d9d2c4"/><rect x="308" y="352" width="4" height="24" fill="#1c1a1a"/>
<rect x="291" y="395" width="5" height="70" fill="#b9b2a5" opacity=".7"/>
<path d="M306 462l28-2v24h-28z" fill="#c6c5b6"/><rect x="305" y="470" width="27" height="13" fill="#5b5546"/>
<path d="M306 470c3-5 8-5 11-1v4h-11z" fill="#9db86a"/>
<path d="M291 474h14v10h-14z" fill="#b9b8ac"/>
<path d="M291 486l40-4v16l-40 4z" fill="#6c9a3a"/><path d="M300 484l30-2v7l-30 6z" fill="#86b34a"/>
<rect x="291" y="500" width="37" height="18" fill="#4d483d"/>
<path d="M296 496l3-2 3-70h3l1 72z" fill="#15161a"/><path d="M300 425h6l3-14h-12z" fill="#c9cfd6"/><path d="M296 411h14l-3-7h-8z" fill="#15161a"/><rect x="302" y="398" width="2" height="7" fill="#15161a"/>
<path d="M299 428h18M303 434h12" stroke="#15161a" stroke-width="1.6"/>
<rect x="333" y="458" width="153" height="60" fill="#1c1d21"/>
<rect x="333" y="334" width="78" height="126" fill="#2e2c2a"/>
<path d="M385 277l28.500 56-3 3.500-25.500-50-45 57-4.500-2z" fill="#aeb2bb"/>
<path d="M385 286.500l25.500 50v8h-69.500z" fill="#33322f"/>
<path d="M383.500 281l1-17h1l1.500 17z" fill="#b5b9c1"/><path d="M385 259v8M382.800 262.500h4.400" stroke="#aeb2bb" stroke-width="1.2"/>
<rect x="335" y="340" width="8" height="4.500" fill="#9096a0"/>
<g stroke="#1a1b1d" stroke-width=".8" opacity=".8"><path d="M338 345v112"/><path d="M343 345v112"/><path d="M348 345v112"/><path d="M353 345v112"/><path d="M358 345v112"/><path d="M363 345v112"/><path d="M368 345v112"/><path d="M373 345v112"/><path d="M378 345v112"/><path d="M383 345v112"/><path d="M388 345v112"/><path d="M393 345v112"/><path d="M398 345v112"/><path d="M403 345v112"/><path d="M408 345v112"/></g>
<rect x="371" y="301.500" width="21" height="30.500" fill="#aab0b8"/><rect x="373.500" y="304" width="16" height="26" fill="#5c7f8e"/><path d="M381.500 304v26M373.500 317h16" stroke="#2f3a40" stroke-width="1.200"/><rect x="382" y="324" width="6" height="5" fill="#c9ccd0"/>
<rect x="358.500" y="334" width="41" height="6.500" fill="#1b1c1f"/><path d="M360 333h8M374 332.500h8M388 333h10" stroke="#b3262c" stroke-width="2"/><path d="M368 333.500h6M382 333.500h6" stroke="#5e8a32" stroke-width="1.500"/>
<rect x="366" y="349" width="26" height="25" fill="#b9bec5"/><rect x="369" y="351" width="20.500" height="23" fill="#3c4043"/><path d="M379 351v23M369 362h20" stroke="#9aa0a6" stroke-width="1"/>
<rect x="357" y="374.500" width="42" height="6" fill="#18191b"/><path d="M359 373.500h9M372 373h10M386 373.500h12" stroke="#b3262c" stroke-width="2.200"/>
<rect x="359.500" y="399" width="33" height="30" fill="#b3b8c0"/><rect x="363" y="401" width="26" height="27" fill="#55524e"/>
<rect x="371" y="401" width="8" height="9" fill="#c8c4bc"/><rect x="380" y="410" width="9" height="9" fill="#bdb8ae"/><rect x="371" y="419" width="9" height="8" fill="#b0aca4"/><rect x="363" y="401" width="7" height="9" fill="#8a7a6a"/>
<path d="M371.500 401v27M380.500 401v27M363 410h26M363 419h26" stroke="#2a2a2a" stroke-width="1"/>
<rect x="353" y="431" width="43" height="6" fill="#17181a"/><path d="M354 429.500h9M366 429h12M381 429.500h14" stroke="#b8242c" stroke-width="2.600"/><path d="M358 431.500h36" stroke="#4d7a2b" stroke-width="1.200"/>
<path d="M343.500 392l3-3h2l3 3 1 10-2 2h-6l-2-2z" fill="#2a2622"/><rect x="345" y="395" width="6" height="8" fill="#f7dc90"/><path d="M348 405v18" stroke="#1a1a1a" stroke-width="2"/>
<rect x="333" y="458" width="78" height="3" fill="#aab0b8"/>
<rect x="334" y="461" width="66" height="25" fill="#aeb4bc"/>
<rect x="335.5" y="463" width="6.0" height="20.500" fill="#3b3b3a"/>
<rect x="336.5" y="464" width="4.0" height="8.500" fill="#c6c4bc" opacity=".75"/><rect x="336.5" y="474" width="4.0" height="8.500" fill="#a8a59c" opacity=".7"/>
<rect x="346.5" y="463" width="18.5" height="20.500" fill="#3b3b3a"/>
<rect x="347.5" y="464" width="16.5" height="8.500" fill="#c6c4bc" opacity=".75"/><rect x="347.5" y="474" width="16.5" height="8.500" fill="#a8a59c" opacity=".7"/>
<path d="M355.8 463v20.500M346.5 473h18.5" stroke="#2a2a2a" stroke-width="1.200"/>
<rect x="369.0" y="463" width="18.5" height="20.500" fill="#3b3b3a"/>
<rect x="370.0" y="464" width="16.5" height="8.500" fill="#c6c4bc" opacity=".75"/><rect x="370.0" y="474" width="16.5" height="8.500" fill="#a8a59c" opacity=".7"/>
<path d="M378.2 463v20.500M369.0 473h18.5" stroke="#2a2a2a" stroke-width="1.200"/>
<rect x="390.500" y="461" width="20.500" height="25" fill="#1c1d22"/>
<path d="M327 488h75v30h-75z" fill="#26282e"/><path d="M331 486h70v3h-70z" fill="#8a8f98"/>
<g stroke="#3a3d44" stroke-width="1"><path d="M327 493h75"/><path d="M327 497h75"/><path d="M327 501h75"/><path d="M327 505h75"/><path d="M327 509h75"/><path d="M327 513h75"/><path d="M327 517h75"/></g>
<rect x="411.500" y="300" width="69" height="160" fill="url(#qbr)"/>
<path d="M420 300.500l27.600-34 25 34z" fill="#51443b"/><path d="M423 300l24.600-30 22 30z" fill="#5d4e44" opacity=".6"/>
<rect x="419.300" y="284" width="9.200" height="16.500" fill="#6a4a3a"/><rect x="423" y="272" width="2.600" height="12" fill="#a0a4aa"/>
<rect x="414.500" y="300.500" width="66" height="5" fill="#d6ccb0"/>
<rect x="428.0" y="306.5" width="49.0" height="34.5" fill="#cfc5a5"/><rect x="429.2" y="307.7" width="46.6" height="32.1" fill="#cfc5a5"/><rect x="430.4" y="308.9" width="44.2" height="29.7" fill="#3a3b40"/><rect x="451.7" y="308.9" width="1.6" height="29.7" fill="#cfc5a5"/><rect x="430.4" y="323.3" width="44.2" height="0.9" fill="#cfc5a5"/>
<rect x="430.500" y="309" width="20" height="10" fill="#6e6a68"/><rect x="454.500" y="309" width="20" height="10" fill="#777370"/>
<rect x="426.0" y="349.0" width="51.0" height="36.5" fill="#cfc5a5"/><rect x="427.2" y="350.2" width="48.6" height="34.1" fill="#cfc5a5"/><rect x="428.4" y="351.4" width="46.2" height="31.7" fill="#35363a"/><rect x="450.7" y="351.4" width="1.6" height="31.7" fill="#cfc5a5"/><rect x="428.4" y="366.8" width="46.2" height="0.9" fill="#cfc5a5"/>
<rect x="428.500" y="351.500" width="21.500" height="10" fill="#8a6a52"/><rect x="453" y="351.500" width="21.500" height="10" fill="#83644e"/>
<rect x="424.0" y="401.0" width="53.0" height="40.0" fill="#d3c9a8"/><rect x="425.4" y="402.4" width="50.2" height="37.2" fill="#d3c9a8"/><rect x="426.6" y="403.6" width="47.8" height="34.8" fill="#2a2b2f"/><rect x="449.7" y="403.6" width="1.6" height="34.8" fill="#d3c9a8"/>
<rect x="427" y="404" width="22" height="8" fill="#3b3c42"/><rect x="452" y="404" width="22" height="8" fill="#3b3c42"/><rect x="436" y="426" width="9" height="10" fill="#b9b6ae"/><rect x="465" y="424" width="7" height="8" fill="#c9c6be"/><rect x="430" y="416" width="3" height="14" fill="#8a3a3a"/>
<rect x="411.500" y="459" width="69" height="28" fill="#1d1e22"/>
<rect x="425" y="460" width="54" height="2.500" fill="#d3c9a8"/><rect x="425" y="460" width="2.200" height="27" fill="#d3c9a8"/><rect x="455" y="460" width="2.400" height="40" fill="#d3c9a8"/><rect x="476.500" y="460" width="2.400" height="40" fill="#d3c9a8"/><rect x="455" y="497" width="24" height="3" fill="#d3c9a8"/>
<rect x="428" y="463" width="26" height="22" fill="#2b2d33"/><path d="M441 463v22M428 474h26" stroke="#15161a" stroke-width="1"/><rect x="429" y="476" width="5" height="8" fill="#aeb2b8"/><rect x="437" y="478" width="4" height="6" fill="#8f949c"/>
<rect x="411.500" y="487" width="69" height="30" fill="#1b1c20"/>
<path d="M411.500 300v188" stroke="#9ea2aa" stroke-width="1.600"/><path d="M480.500 300v200" stroke="#8a8e96" stroke-width="1.500"/>
<path d="M481.500 297h93.500l4 73 8.500 106h-106z" fill="#d9dade"/>
<path d="M481.500 297h93.500l1.500 30h-95z" fill="#cfd1d8"/>
<path d="M479 296.500l7-8 4-1 3-5 4-1 3-5 4-1 3-5 4-1 3-5 4-1 3-5 0-5h4l0 5 24 22 4 1 24 22-.5 5.500z" fill="url(#qrf)"/>
<path d="M478 294.500l97 5.500v4l-97-5.500z" fill="#1d2230"/>
<rect x="500.500" y="262" width="2.400" height="11" fill="#2a2c33"/>
<path d="M515 271l24-2 1 28-24-2z" fill="#ddd6b6"/><path d="M521.500 275l15.500-1 .5 18.500-15-1z" fill="#5b86c8"/><path d="M521.500 275l15.500-1 .5 18.500-15-1z" fill="none" stroke="#eef0f4" stroke-width="1.300"/>
<rect x="492.5" y="302.5" width="32.5" height="34.5" fill="#1d2230"/><rect x="494.1" y="304.1" width="29.3" height="31.3" fill="#e2dbbd"/><rect x="495.3" y="305.3" width="26.9" height="28.9" fill="#a3a5a6"/><rect x="507.9" y="305.3" width="1.6" height="28.9" fill="#1d2230"/><rect x="495.3" y="314.5" width="26.9" height="0.9" fill="#e2dbbd"/><rect x="495.3" y="324.1" width="26.9" height="0.9" fill="#e2dbbd"/>
<rect x="533.5" y="306.0" width="32.5" height="33.5" fill="#1d2230"/><rect x="535.1" y="307.6" width="29.3" height="30.3" fill="#e2dbbd"/><rect x="536.3" y="308.8" width="26.9" height="27.9" fill="#8098a8"/><rect x="549.0" y="308.8" width="1.6" height="27.9" fill="#1d2230"/><rect x="536.3" y="317.7" width="26.9" height="0.9" fill="#e2dbbd"/><rect x="536.3" y="327.0" width="26.9" height="0.9" fill="#e2dbbd"/>
<rect x="491.5" y="343.5" width="31.0" height="43.5" fill="#1d2230"/><rect x="493.1" y="345.1" width="27.8" height="40.3" fill="#e2dbbd"/><rect x="494.3" y="346.3" width="25.4" height="37.9" fill="#a3a5a6"/><rect x="506.2" y="346.3" width="1.6" height="37.9" fill="#1d2230"/><rect x="494.3" y="355.3" width="25.4" height="0.9" fill="#e2dbbd"/><rect x="494.3" y="364.8" width="25.4" height="0.9" fill="#e2dbbd"/><rect x="494.3" y="374.3" width="25.4" height="0.9" fill="#e2dbbd"/>
<rect x="534.0" y="345.0" width="33.0" height="42.0" fill="#1d2230"/><rect x="535.6" y="346.6" width="29.8" height="38.8" fill="#e2dbbd"/><rect x="536.8" y="347.8" width="27.4" height="36.4" fill="#7f95a6"/><rect x="549.7" y="347.8" width="1.6" height="36.4" fill="#1d2230"/><rect x="536.8" y="356.5" width="27.4" height="0.9" fill="#e2dbbd"/><rect x="536.8" y="365.6" width="27.4" height="0.9" fill="#e2dbbd"/><rect x="536.8" y="374.7" width="27.4" height="0.9" fill="#e2dbbd"/>
<rect x="495" y="347" width="24" height="8" fill="#6d8aa2" opacity=".7"/><rect x="538" y="349" width="25" height="8" fill="#5b8dc0" opacity=".7"/>
<rect x="513.5" y="396.5" width="39.0" height="42.0" fill="#1d2230"/><rect x="515.1" y="398.1" width="35.8" height="38.8" fill="#e2dbbd"/><rect x="516.3" y="399.3" width="33.4" height="36.4" fill="#97999e"/><rect x="532.2" y="399.3" width="1.6" height="36.4" fill="#1d2230"/><rect x="516.3" y="411.0" width="33.4" height="0.9" fill="#e2dbbd"/><rect x="516.3" y="423.1" width="33.4" height="0.9" fill="#e2dbbd"/>
<rect x="517.5" y="447.5" width="35.0" height="24.5" fill="#1d2230"/><rect x="519.1" y="449.1" width="31.8" height="21.3" fill="#e2dbbd"/><rect x="520.3" y="450.3" width="29.4" height="18.9" fill="#9a9a98"/><rect x="534.2" y="450.3" width="1.6" height="18.9" fill="#1d2230"/><rect x="520.3" y="459.3" width="29.4" height="0.9" fill="#e2dbbd"/>
<rect x="512.500" y="437.500" width="42" height="2.500" fill="#1d2230"/><rect x="516.500" y="471" width="38" height="2.500" fill="#1d2230"/>
<rect x="501" y="447" width="4.500" height="4.500" fill="#1d1e22"/><rect x="510" y="439" width="3.500" height="3" fill="#1d1e22"/><rect x="510.500" y="441" width="1.200" height="8" fill="#1d1e22"/><circle cx="562.500" cy="439.500" r="2.200" fill="#22242a"/><rect x="557" y="442" width="1.300" height="7" fill="#1d1e22"/>
<rect x="498" y="391" width="1.200" height="5" fill="#333"/><rect x="563" y="393" width="1.200" height="5" fill="#333"/><rect x="497.500" y="398" width="5" height="5" fill="#c2c4c8"/>
<path d="M481.500 475h106l1 43h-107z" fill="#1c2030"/>
<g fill="#4a4437">
<rect x="392.5" y="478" width="5.500" height="40" />
<rect x="451.5" y="478" width="5.500" height="40" />
<rect x="518.0" y="478" width="5.500" height="40" />
<rect x="571.5" y="478" width="5.500" height="40" />
<rect x="600" y="478" width="6" height="38"/>
</g>
<rect x="387.800" y="484" width="98" height="7.500" fill="#4f4a3b"/><rect x="505" y="484" width="89" height="7.500" fill="#4f4a3b"/>
<path d="M392 484.800h90M510 484.800h80" stroke="#5e7a3a" stroke-width="1.400" opacity=".8"/>
<rect x="385.800" y="504" width="100" height="8.500" fill="#514c3d"/><rect x="505" y="504" width="97" height="8.500" fill="#514c3d"/>
<path d="M594 490l14-10v7l-14 10zM598 512l14-10v8l-14 10z" fill="#6b6455"/>
<rect x="291" y="516" width="348" height="66" fill="#231f1a"/>
<rect x="291" y="516" width="348" height="12" fill="#17171a" opacity=".7"/>
<rect x="291" y="536" width="348" height="45" fill="#2c2720" opacity=".8"/>
<path d="M291 552l30 6 8 23h-38z" fill="#30343c" opacity=".5"/>
<rect x="291" y="516" width="348" height="66" fill="url(#qwg)" filter="url(#qwt)"/>
<path d="M585 581l10-30 8-28 36-8v66z" fill="#9aa4b0" opacity=".45"/>
<path d="M600 581l8-30 31-20v50z" fill="#c3cbd6" opacity=".35"/>
<g filter="url(#qlf)" fill="url(#qcg)">
<path d="M455 112L450 140 470 150 497 158 515 150 522 170 539 180 536 200 524 210 527 231 540 250 532 262 560 268 590 262 610 285 645 290 645 112z"/>
<ellipse cx="505" cy="214" rx="9" ry="5"/><ellipse cx="513" cy="226" rx="6" ry="5"/>
</g>
<g filter="url(#qlf3)" fill="#5b8a31">
<path d="M406 110L390 126 382 140 386 160 406 154 427 166 436 192 445 217 466 229 480 227 486 211 498 202 505 183 499 160 475 155 455 145 462 110z"/>
</g>
<g filter="url(#qlf2)" fill="#6a9a38">
<path d="M524 252L542 279 552 290 536 300 531 322 545 336 565 342 572 352 585 360 597 364 600 384 612 390 645 392 645 252z"/>
</g>
<g fill="#a8c862"><ellipse cx="353" cy="150" rx="5" ry="3.500" transform="rotate(-30 353 150)"/><ellipse cx="364" cy="146" rx="5.500" ry="4" transform="rotate(20 364 146)"/><ellipse cx="349" cy="158" rx="5" ry="3.500" transform="rotate(10 349 158)"/><ellipse cx="361" cy="157" rx="5" ry="4"/><ellipse cx="371" cy="155" rx="4.500" ry="4"/><ellipse cx="377" cy="149" rx="4" ry="3.500"/><ellipse cx="375" cy="161" rx="3" ry="4"/><ellipse cx="545" cy="310" rx="6" ry="4.500"/><ellipse cx="537" cy="322" rx="4" ry="5"/><ellipse cx="556" cy="300" rx="6" ry="4"/></g>
<path d="M603 118h36v278c-3-6-5-8-8-18-3-12-4-26-10-40-3-20 2-50-1-82-2-22-9-38-17-138z" fill="#2a221b"/>
<path d="M622 118h10c2 60-2 120 4 200l3 40v-240z" fill="#3a3026" opacity=".6"/>
<g fill="#5b8a30"><ellipse cx="612" cy="215" rx="8" ry="6"/><ellipse cx="618" cy="268" rx="6" ry="9"/><ellipse cx="621" cy="305" rx="5" ry="8"/><ellipse cx="628" cy="352" rx="5" ry="9"/><ellipse cx="635" cy="300" rx="4" ry="14" fill="#8fb84e"/></g>
</g></svg>
<svg style="left:14px;top:729px" width="20" height="20" viewBox="0 0 20 20">
  <circle cx="10.300" cy="10.200" r="9" fill="#f5a50f"/>
  <path d="M5.500 10.500l3.500 3.500 6.500-7" fill="none" stroke="#1a1408" stroke-width="2.200"/>
</svg>
<!-- strip scrollbar -->
<svg style="left:911px;top:650px" width="10" height="104" viewBox="911 650 10 104">
  <path d="M913 655.500h5l-2.500-3.500z" fill="#2c4054"/>
  <rect x="913.500" y="729" width="5" height="11" rx="2.5" fill="#35506a"/>
  <path d="M913 747h5l-2.500 3.500z" fill="#2c4054"/>
</svg>
<!-- status bar -->
<span class="t" style="left:6.5px;top:771.6px;font-size:12px;color:#b7bbce;letter-spacing:-0.04px;">Files in folder 49 / one file selected</span>
<svg style="left:695px;top:762px" width="228" height="30" viewBox="695 762 228 30" fill="none" stroke-width="1.700">
  <g stroke="#4a7892">
    <path d="M708 767v19M701.500 773.500l6.500-6.800 6.500 6.800M701.500 779.500l6.500 6.800 6.500-6.800"/>
    <path d="M760.650 781.400A8.500 8.500 0 1 1 772.900 771.100"/>
    <circle cx="768.700" cy="777.400" r="8"/>
    <path d="M764 777.500l3.600 3.600 6.400-6.800" stroke-width="1.900"/>
    <circle cx="796.200" cy="777.400" r="8.300" stroke-dasharray="4.200 3.200"/>
    <path d="M786.500 780.500A8.500 8.500 0 1 1 799.400 769.750"/>
    <path d="M835 777h80" stroke-width="2"/>
  </g>
  <path d="M728.500 775.500h19M734.500 769.300l-6.500 6.200 6.500 6.200M741.500 769.300l6.500 6.200-6.500 6.200" stroke="#f5a50f" stroke-width="1.800"/>
  <circle cx="864.800" cy="777" r="7" fill="#f5a50f"/>
</svg>
<!-- ===== side panel ===== -->
<div id="side" class="abs"></div>
<div class="abs" style="left:930px;top:290px;width:321px;height:46px;background:linear-gradient(90deg,#252e48 0,#1f273c 45%,#171c2c 78%,rgba(22,27,43,0) 100%)"></div>
<div class="sep" style="top:151px"></div>
<div class="sep" style="top:197px"></div>
<div class="sep" style="top:243px"></div>
<div class="sep" style="top:289px"></div>
<div class="sep" style="top:335px"></div>
<div class="sep" style="top:755px"></div>
<span class="t" style="left:979.4px;top:121.7px;font-size:15.4px;color:#d3d6e4;letter-spacing:0.25px;">Correction</span>
<span class="t" style="left:979.9px;top:167.7px;font-size:15.4px;color:#d3d6e4;letter-spacing:-0.03px;">Light Curves</span>
<span class="t" style="left:979.4px;top:213.7px;font-size:15.4px;color:#d3d6e4;letter-spacing:0.16px;">Color</span>
<span class="t" style="left:979.4px;top:259.7px;font-size:15.4px;color:#d3d6e4;letter-spacing:0.29px;">Straighten horizon</span>
<span class="t" style="left:979.9px;top:305.8px;font-size:15.4px;color:#f5a50f;letter-spacing:-0.17px;">Perspective</span>
<span class="t" style="left:979.3px;top:771.8px;font-size:15.4px;color:#d3d6e4;letter-spacing:0.19px;">Crop</span>
<span class="t" style="left:950.7px;top:357.5px;font-size:12px;color:#d3d6e4;letter-spacing:0.00px;">Drag the points to adjust the perspective.</span>
<span class="t" style="left:950.7px;top:460.0px;font-size:12px;color:#d3d6e4;letter-spacing:-0.59px;font-weight:bold;">Border:</span>
<span class="t" style="left:975.5px;top:704.6px;font-size:12px;color:#d3d6e4;letter-spacing:-0.23px;">Extend Border</span>
<!-- row icons -->
<svg style="left:931px;top:106px" width="60" height="687" viewBox="931 106 60 687" fill="none" stroke="#c5c6d8" stroke-width="1.700">
  <!-- correction: sun / contrast -->
  <circle cx="955" cy="128.900" r="5.700"/>
  <path d="M955 123.200a5.700 5.700 0 0 1 0 11.400z" fill="#c5c6d8" stroke="none"/>
  <path d="M955 115.700v5.800M955 136.300v5.800M941.900 128.900h5.300M962.900 128.900h5.300M946.100 120l3.400 3.400M960.500 134.400l3.400 3.400M963.900 120l-3.400 3.400M949.500 134.400l-3.400 3.400" stroke-width="1.600"/>
  <!-- light curves -->
  <path d="M943.800 163.300v22.800h23" stroke-width="1.800"/>
  <path d="M946.300 184.600c3-.6 4.500-1.500 5.700-3.300 1.500-2.200 2.300-4.200 3.300-6.700 1.100-2.800 2-5.600 3.800-7.700 1.300-1.500 3.500-2.300 7.700-2.500" stroke-width="1.600"/>
  <circle cx="952" cy="181.300" r="1.900" fill="#c5c6d8" stroke="none"/>
  <circle cx="960.600" cy="166.400" r="1.900" fill="#c5c6d8" stroke="none"/>
  <!-- color bucket -->
  <rect x="945.200" y="217.400" width="19.600" height="15.200" rx="2"/>
  <path d="M947.600 217.400a7.800 8.200 0 0 1 15.600 0"/>
  <path d="M952.500 218.800h5" stroke-width="1.500"/>
  <path d="M958.100 217.500v5" stroke-width="2.200"/>
  <circle cx="958.100" cy="223.200" r="1.700" fill="#c5c6d8" stroke="none"/>
  <!-- straighten horizon -->
  <g transform="rotate(-12 955 267)">
    <rect x="942.500" y="258" width="25" height="18.500" stroke-width="1.700"/>
    <path d="M943 274l7.500-7.500 5 5 4-3.500 7.500 6" stroke-width="1.600"/>
    <circle cx="961.500" cy="263" r="1.500" fill="#c5c6d8" stroke="none"/>
  </g>
  <!-- perspective -->
  <g stroke="#f5a50f" stroke-width="2" fill="#f5a50f">
    <path d="M947.300 302.500h15.100l5.200 21.500h-24.900z" fill="none"/>
    <circle cx="947.300" cy="302.500" r="2.900" stroke="none"/><circle cx="962.400" cy="302.500" r="2.900" stroke="none"/>
    <circle cx="942.700" cy="324" r="2.900" stroke="none"/><circle cx="967.600" cy="324" r="2.900" stroke="none"/>
  </g>
  <!-- crop -->
  <path d="M948 767V786H967M942.800 771.900H962V790.700" stroke-width="2.200"/>
  <path d="M966.500 767.400L949 785" stroke-width="1.700"/>
</svg>
<!-- star / help / close -->
<span class="t" style="left:1178.5px;top:302.8px;font-size:22.8px;color:#f5a50f;letter-spacing:0.00px;">★</span>
<svg style="left:1200px;top:303px" width="42" height="20" viewBox="1200 303 42 20" fill="none" stroke="#4a7892" stroke-width="1.300">
  <circle cx="1209.900" cy="313.300" r="7.300"/>
  <circle cx="1231.100" cy="313.300" r="7.300"/>
  <path d="M1228.300 310.500l5.600 5.600M1233.900 310.500l-5.600 5.600" stroke-width="1.500"/>
  <path d="M1207.700 311.500a2.300 2.300 0 1 1 3.400 2q-1.200.7-1.200 2" stroke-width="1.300"/>
  <circle cx="1209.900" cy="317.700" r=".9" fill="#4a7892" stroke="none"/>
</svg>
<!-- mode buttons -->
<svg style="left:1028px;top:390px" width="126" height="40" viewBox="1028 390 126 40" fill="none" stroke-width="1.700">
  <g stroke="#39627a" stroke-width="2">
    <circle cx="1048" cy="410" r="17.500"/><circle cx="1090" cy="410" r="17.500"/><circle cx="1132" cy="410" r="17.500"/>
  </g>
  <g stroke="#f5a50f" fill="#f5a50f">
    <path d="M1043.300 403h10l3.200 13.500h-16.700z" fill="none"/>
    <circle cx="1043.300" cy="403" r="1.900" stroke="none"/><circle cx="1053.300" cy="403" r="1.900" stroke="none"/>
    <circle cx="1039.800" cy="416.500" r="1.900" stroke="none"/><circle cx="1056.500" cy="416.500" r="1.900" stroke="none"/>
  </g>
  <g stroke="#c5c6d8" fill="#c5c6d8">
    <path d="M1085.500 403.500l-2.500 13.500M1094.500 403.500l2.500 13.500"/>
    <circle cx="1085.500" cy="403.500" r="1.900" stroke="none"/><circle cx="1094.500" cy="403.500" r="1.900" stroke="none"/>
    <circle cx="1083" cy="417" r="1.900" stroke="none"/><circle cx="1097" cy="417" r="1.900" stroke="none"/>
    <path d="M1127.500 404.500h9M1124.500 416h15"/>
    <circle cx="1127.500" cy="404.500" r="1.900" stroke="none"/><circle cx="1136.500" cy="404.500" r="1.900" stroke="none"/>
    <circle cx="1124.500" cy="416" r="1.900" stroke="none"/><circle cx="1139.500" cy="416" r="1.900" stroke="none"/>
  </g>
</svg>
<!-- border thumbnails -->
<svg style="left:954px;top:485px;overflow:hidden" width="122" height="82" viewBox="0 0 122 82"><rect width="122" height="82" fill="#07080d"/><defs><clipPath id="tc1"><path d="M15.900 7.200H106.600L114.300 74.200H7.500z"/></clipPath></defs><g clip-path="url(#tc1)"><g transform="translate(7.5 7.2)"><rect x="0" y="0" width="107" height="67" fill="#cde3f2"/><rect x="0" y="10" width="107" height="12" fill="#dbeaf3"/><rect x="0" y="22" width="107" height="22" fill="#eef4f7"/><path d="M96 20c4-6 9-6 11-3v40h-9c-3-8-4-20-2-37z" fill="#4f8a2c"/><path d="M99 24c3-3 6-3 8 0v18h-8z" fill="#6aa43a"/><path d="M33 21l22-5 44 5v14H33z" fill="#f3f3f1"/><path d="M33 21l22-5 44 5v2.500l-44-4.500-22 4.500z" fill="#fbfbfa"/><rect x="29" y="23" width="5" height="11" fill="#e8e8e6"/><rect x="28" y="21.500" width="5" height="2" fill="#6b6b6b"/><path d="M36 27.500l9-2.500h44v9.500H36z" fill="#7b5a44"/><rect x="51.500" y="25.500" width="4.500" height="8.500" fill="#f1e9a2"/><rect x="77" y="26" width="7" height="7.500" fill="#efe27e"/><rect x="86" y="26.500" width="4.500" height="7" fill="#e9d978"/><rect x="39" y="28.500" width="3" height="5" fill="#d9a84e"/><rect x="44" y="27.500" width="3" height="6" fill="#c99646"/><rect x="70" y="25" width="2" height="9.500" fill="#5b4232"/><path d="M10 34.500h89v19H10z" fill="#f4f4f2"/><path d="M10 34.500h89v3H10z" fill="#ffffff"/><rect x="21" y="42" width="25" height="12" fill="#6a5b55"/><path d="M21 45h25M21 48h25M21 51h25" stroke="#5b4d48" stroke-width=".5"/><rect x="53" y="40" width="4.500" height="13" fill="#f0d76a"/><rect x="60" y="39.500" width="9" height="8" fill="#f4ea9a"/><rect x="70.500" y="40" width="2" height="13.500" fill="#7b5a44"/><rect x="60" y="47.500" width="9" height="6" fill="#e8e0b0"/><rect x="77" y="42.500" width="16" height="4.500" fill="#5a4a3a"/><rect x="78" y="43.300" width="14" height="3" fill="#f0d973"/><path d="M81.500 43.300v3M85 43.300v3M88.500 43.300v3" stroke="#7b5a44" stroke-width=".5"/><rect x="99" y="45" width="8" height="8" fill="#5d7f9c"/><path d="M0 54h107v13H0z" fill="#e4e2dc"/><path d="M0 57.500l16-1.500 24 11H0z" fill="#6a9e35"/><path d="M0 60l14-2 18 9H0z" fill="#7cae3e"/><path d="M88 55l12-1 7 2v3z" fill="#79a840"/><path d="M10 53.500h89v1.500H10z" fill="#b9b7b0"/><path d="M60.500 54c-1.500-4-.5-9 .8-12 1.300 3 2.300 8 .8 12zM65 54.500c-1.500-4-.5-8 .8-11 1.300 3 2.300 7 .8 11z" fill="#3f6f28"/><path d="M98 56c-2-3-1-7 1-10 2 3 3 7 1 10z" fill="#47792b"/><path d="M11.500 56c0-9-4-12-7-16l1.500-1c3 3 6 6 6.500 10 .5-8 1-16 2-26l1.500-1-1 10c-1 8-1.500 15-1.500 24z" fill="#9a866e"/><path d="M14.500 32l12-13 1 1-12 14z" fill="#9a866e"/><g fill="#4f8a2b"><ellipse cx="11" cy="4" rx="8" ry="4.500"/><ellipse cx="27" cy="3.500" rx="9" ry="3.500"/><ellipse cx="40" cy="5" rx="6" ry="3"/><ellipse cx="19" cy="10" rx="6" ry="3.500"/><ellipse cx="33" cy="10" rx="5" ry="3"/><ellipse cx="9" cy="13" rx="4.500" ry="4"/><ellipse cx="25" cy="17" rx="6" ry="3.500"/><ellipse cx="13" cy="21" rx="4" ry="3"/><ellipse cx="36" cy="16" rx="3.500" ry="2.500"/><ellipse cx="3" cy="24" rx="3.500" ry="6"/><ellipse cx="9" cy="30" rx="3.500" ry="3"/><ellipse cx="4" cy="40" rx="3" ry="5"/><ellipse cx="44" cy="9" rx="3" ry="2"/></g><g fill="#86ba48"><ellipse cx="9" cy="3" rx="4.500" ry="2.500"/><ellipse cx="24" cy="2.500" rx="5" ry="2"/><ellipse cx="38" cy="4" rx="3.500" ry="1.800"/><ellipse cx="17" cy="9" rx="3.500" ry="2"/><ellipse cx="31" cy="9" rx="3" ry="1.800"/><ellipse cx="24" cy="16" rx="3.500" ry="2"/><ellipse cx="8" cy="12" rx="2.500" ry="2.200"/><ellipse cx="3" cy="22" rx="2" ry="3.500"/><ellipse cx="4" cy="50" rx="3.500" ry="4"/></g><ellipse cx="3" cy="62" rx="3.500" ry="4.500" fill="#9ab536"/></g></g></svg>
<svg style="left:1104px;top:485px;overflow:hidden" width="122" height="82" viewBox="0 0 122 82"><rect width="122" height="82" fill="#e7e9f3"/><defs><clipPath id="tc2"><path d="M15.900 7.200H106.600L114.300 74.200H7.500z"/></clipPath></defs><g clip-path="url(#tc2)"><g transform="translate(7.5 7.2)"><rect x="0" y="0" width="107" height="67" fill="#cde3f2"/><rect x="0" y="10" width="107" height="12" fill="#dbeaf3"/><rect x="0" y="22" width="107" height="22" fill="#eef4f7"/><path d="M96 20c4-6 9-6 11-3v40h-9c-3-8-4-20-2-37z" fill="#4f8a2c"/><path d="M99 24c3-3 6-3 8 0v18h-8z" fill="#6aa43a"/><path d="M33 21l22-5 44 5v14H33z" fill="#f3f3f1"/><path d="M33 21l22-5 44 5v2.500l-44-4.500-22 4.500z" fill="#fbfbfa"/><rect x="29" y="23" width="5" height="11" fill="#e8e8e6"/><rect x="28" y="21.500" width="5" height="2" fill="#6b6b6b"/><path d="M36 27.500l9-2.500h44v9.500H36z" fill="#7b5a44"/><rect x="51.500" y="25.500" width="4.500" height="8.500" fill="#f1e9a2"/><rect x="77" y="26" width="7" height="7.500" fill="#efe27e"/><rect x="86" y="26.500" width="4.500" height="7" fill="#e9d978"/><rect x="39" y="28.500" width="3" height="5" fill="#d9a84e"/><rect x="44" y="27.500" width="3" height="6" fill="#c99646"/><rect x="70" y="25" width="2" height="9.500" fill="#5b4232"/><path d="M10 34.500h89v19H10z" fill="#f4f4f2"/><path d="M10 34.500h89v3H10z" fill="#ffffff"/><rect x="21" y="42" width="25" height="12" fill="#6a5b55"/><path d="M21 45h25M21 48h25M21 51h25" stroke="#5b4d48" stroke-width=".5"/><rect x="53" y="40" width="4.500" height="13" fill="#f0d76a"/><rect x="60" y="39.500" width="9" height="8" fill="#f4ea9a"/><rect x="70.500" y="40" width="2" height="13.500" fill="#7b5a44"/><rect x="60" y="47.500" width="9" height="6" fill="#e8e0b0"/><rect x="77" y="42.500" width="16" height="4.500" fill="#5a4a3a"/><rect x="78" y="43.300" width="14" height="3" fill="#f0d973"/><path d="M81.500 43.300v3M85 43.300v3M88.500 43.300v3" stroke="#7b5a44" stroke-width=".5"/><rect x="99" y="45" width="8" height="8" fill="#5d7f9c"/><path d="M0 54h107v13H0z" fill="#e4e2dc"/><path d="M0 57.500l16-1.500 24 11H0z" fill="#6a9e35"/><path d="M0 60l14-2 18 9H0z" fill="#7cae3e"/><path d="M88 55l12-1 7 2v3z" fill="#79a840"/><path d="M10 53.500h89v1.500H10z" fill="#b9b7b0"/><path d="M60.500 54c-1.500-4-.5-9 .8-12 1.300 3 2.300 8 .8 12zM65 54.500c-1.500-4-.5-8 .8-11 1.300 3 2.300 7 .8 11z" fill="#3f6f28"/><path d="M98 56c-2-3-1-7 1-10 2 3 3 7 1 10z" fill="#47792b"/><path d="M11.500 56c0-9-4-12-7-16l1.500-1c3 3 6 6 6.500 10 .5-8 1-16 2-26l1.500-1-1 10c-1 8-1.500 15-1.500 24z" fill="#9a866e"/><path d="M14.500 32l12-13 1 1-12 14z" fill="#9a866e"/><g fill="#4f8a2b"><ellipse cx="11" cy="4" rx="8" ry="4.500"/><ellipse cx="27" cy="3.500" rx="9" ry="3.500"/><ellipse cx="40" cy="5" rx="6" ry="3"/><ellipse cx="19" cy="10" rx="6" ry="3.500"/><ellipse cx="33" cy="10" rx="5" ry="3"/><ellipse cx="9" cy="13" rx="4.500" ry="4"/><ellipse cx="25" cy="17" rx="6" ry="3.500"/><ellipse cx="13" cy="21" rx="4" ry="3"/><ellipse cx="36" cy="16" rx="3.500" ry="2.500"/><ellipse cx="3" cy="24" rx="3.500" ry="6"/><ellipse cx="9" cy="30" rx="3.500" ry="3"/><ellipse cx="4" cy="40" rx="3" ry="5"/><ellipse cx="44" cy="9" rx="3" ry="2"/></g><g fill="#86ba48"><ellipse cx="9" cy="3" rx="4.500" ry="2.500"/><ellipse cx="24" cy="2.500" rx="5" ry="2"/><ellipse cx="38" cy="4" rx="3.500" ry="1.800"/><ellipse cx="17" cy="9" rx="3.500" ry="2"/><ellipse cx="31" cy="9" rx="3" ry="1.800"/><ellipse cx="24" cy="16" rx="3.500" ry="2"/><ellipse cx="8" cy="12" rx="2.500" ry="2.200"/><ellipse cx="3" cy="22" rx="2" ry="3.500"/><ellipse cx="4" cy="50" rx="3.500" ry="4"/></g><ellipse cx="3" cy="62" rx="3.500" ry="4.500" fill="#9ab536"/></g></g></svg>
<svg style="left:954px;top:585px;overflow:hidden" width="122" height="82" viewBox="0 0 122 82"><rect width="122" height="82" fill="#cfe3ef"/><rect y="70" width="122" height="12" fill="#e4e2dc"/><g transform="translate(7.5 7.2) scale(-1 1)"><rect x="0" y="0" width="107" height="67" fill="#cde3f2"/><rect x="0" y="10" width="107" height="12" fill="#dbeaf3"/><rect x="0" y="22" width="107" height="22" fill="#eef4f7"/><path d="M96 20c4-6 9-6 11-3v40h-9c-3-8-4-20-2-37z" fill="#4f8a2c"/><path d="M99 24c3-3 6-3 8 0v18h-8z" fill="#6aa43a"/><path d="M33 21l22-5 44 5v14H33z" fill="#f3f3f1"/><path d="M33 21l22-5 44 5v2.500l-44-4.500-22 4.500z" fill="#fbfbfa"/><rect x="29" y="23" width="5" height="11" fill="#e8e8e6"/><rect x="28" y="21.500" width="5" height="2" fill="#6b6b6b"/><path d="M36 27.500l9-2.500h44v9.500H36z" fill="#7b5a44"/><rect x="51.500" y="25.500" width="4.500" height="8.500" fill="#f1e9a2"/><rect x="77" y="26" width="7" height="7.500" fill="#efe27e"/><rect x="86" y="26.500" width="4.500" height="7" fill="#e9d978"/><rect x="39" y="28.500" width="3" height="5" fill="#d9a84e"/><rect x="44" y="27.500" width="3" height="6" fill="#c99646"/><rect x="70" y="25" width="2" height="9.500" fill="#5b4232"/><path d="M10 34.500h89v19H10z" fill="#f4f4f2"/><path d="M10 34.500h89v3H10z" fill="#ffffff"/><rect x="21" y="42" width="25" height="12" fill="#6a5b55"/><path d="M21 45h25M21 48h25M21 51h25" stroke="#5b4d48" stroke-width=".5"/><rect x="53" y="40" width="4.500" height="13" fill="#f0d76a"/><rect x="60" y="39.500" width="9" height="8" fill="#f4ea9a"/><rect x="70.500" y="40" width="2" height="13.500" fill="#7b5a44"/><rect x="60" y="47.500" width="9" height="6" fill="#e8e0b0"/><rect x="77" y="42.500" width="16" height="4.500" fill="#5a4a3a"/><rect x="78" y="43.300" width="14" height="3" fill="#f0d973"/><path d="M81.500 43.300v3M85 43.300v3M88.500 43.300v3" stroke="#7b5a44" stroke-width=".5"/><rect x="99" y="45" width="8" height="8" fill="#5d7f9c"/><path d="M0 54h107v13H0z" fill="#e4e2dc"/><path d="M0 57.500l16-1.500 24 11H0z" fill="#6a9e35"/><path d="M0 60l14-2 18 9H0z" fill="#7cae3e"/><path d="M88 55l12-1 7 2v3z" fill="#79a840"/><path d="M10 53.500h89v1.500H10z" fill="#b9b7b0"/><path d="M60.500 54c-1.500-4-.5-9 .8-12 1.300 3 2.300 8 .8 12zM65 54.500c-1.500-4-.5-8 .8-11 1.300 3 2.300 7 .8 11z" fill="#3f6f28"/><path d="M98 56c-2-3-1-7 1-10 2 3 3 7 1 10z" fill="#47792b"/><path d="M11.500 56c0-9-4-12-7-16l1.500-1c3 3 6 6 6.500 10 .5-8 1-16 2-26l1.500-1-1 10c-1 8-1.500 15-1.500 24z" fill="#9a866e"/><path d="M14.500 32l12-13 1 1-12 14z" fill="#9a866e"/><g fill="#4f8a2b"><ellipse cx="11" cy="4" rx="8" ry="4.500"/><ellipse cx="27" cy="3.500" rx="9" ry="3.500"/><ellipse cx="40" cy="5" rx="6" ry="3"/><ellipse cx="19" cy="10" rx="6" ry="3.500"/><ellipse cx="33" cy="10" rx="5" ry="3"/><ellipse cx="9" cy="13" rx="4.500" ry="4"/><ellipse cx="25" cy="17" rx="6" ry="3.500"/><ellipse cx="13" cy="21" rx="4" ry="3"/><ellipse cx="36" cy="16" rx="3.500" ry="2.500"/><ellipse cx="3" cy="24" rx="3.500" ry="6"/><ellipse cx="9" cy="30" rx="3.500" ry="3"/><ellipse cx="4" cy="40" rx="3" ry="5"/><ellipse cx="44" cy="9" rx="3" ry="2"/></g><g fill="#86ba48"><ellipse cx="9" cy="3" rx="4.500" ry="2.500"/><ellipse cx="24" cy="2.500" rx="5" ry="2"/><ellipse cx="38" cy="4" rx="3.500" ry="1.800"/><ellipse cx="17" cy="9" rx="3.500" ry="2"/><ellipse cx="31" cy="9" rx="3" ry="1.800"/><ellipse cx="24" cy="16" rx="3.500" ry="2"/><ellipse cx="8" cy="12" rx="2.500" ry="2.200"/><ellipse cx="3" cy="22" rx="2" ry="3.500"/><ellipse cx="4" cy="50" rx="3.500" ry="4"/></g><ellipse cx="3" cy="62" rx="3.500" ry="4.500" fill="#9ab536"/></g><g transform="translate(221.5 7.2) scale(-1 1)"><rect x="0" y="0" width="107" height="67" fill="#cde3f2"/><rect x="0" y="10" width="107" height="12" fill="#dbeaf3"/><rect x="0" y="22" width="107" height="22" fill="#eef4f7"/><path d="M96 20c4-6 9-6 11-3v40h-9c-3-8-4-20-2-37z" fill="#4f8a2c"/><path d="M99 24c3-3 6-3 8 0v18h-8z" fill="#6aa43a"/><path d="M33 21l22-5 44 5v14H33z" fill="#f3f3f1"/><path d="M33 21l22-5 44 5v2.500l-44-4.500-22 4.500z" fill="#fbfbfa"/><rect x="29" y="23" width="5" height="11" fill="#e8e8e6"/><rect x="28" y="21.500" width="5" height="2" fill="#6b6b6b"/><path d="M36 27.500l9-2.500h44v9.500H36z" fill="#7b5a44"/><rect x="51.500" y="25.500" width="4.500" height="8.500" fill="#f1e9a2"/><rect x="77" y="26" width="7" height="7.500" fill="#efe27e"/><rect x="86" y="26.500" width="4.500" height="7" fill="#e9d978"/><rect x="39" y="28.500" width="3" height="5" fill="#d9a84e"/><rect x="44" y="27.500" width="3" height="6" fill="#c99646"/><rect x="70" y="25" width="2" height="9.500" fill="#5b4232"/><path d="M10 34.500h89v19H10z" fill="#f4f4f2"/><path d="M10 34.500h89v3H10z" fill="#ffffff"/><rect x="21" y="42" width="25" height="12" fill="#6a5b55"/><path d="M21 45h25M21 48h25M21 51h25" stroke="#5b4d48" stroke-width=".5"/><rect x="53" y="40" width="4.500" height="13" fill="#f0d76a"/><rect x="60" y="39.500" width="9" height="8" fill="#f4ea9a"/><rect x="70.500" y="40" width="2" height="13.500" fill="#7b5a44"/><rect x="60" y="47.500" width="9" height="6" fill="#e8e0b0"/><rect x="77" y="42.500" width="16" height="4.500" fill="#5a4a3a"/><rect x="78" y="43.300" width="14" height="3" fill="#f0d973"/><path d="M81.500 43.300v3M85 43.300v3M88.500 43.300v3" stroke="#7b5a44" stroke-width=".5"/><rect x="99" y="45" width="8" height="8" fill="#5d7f9c"/><path d="M0 54h107v13H0z" fill="#e4e2dc"/><path d="M0 57.500l16-1.500 24 11H0z" fill="#6a9e35"/><path d="M0 60l14-2 18 9H0z" fill="#7cae3e"/><path d="M88 55l12-1 7 2v3z" fill="#79a840"/><path d="M10 53.500h89v1.500H10z" fill="#b9b7b0"/><path d="M60.500 54c-1.500-4-.5-9 .8-12 1.300 3 2.300 8 .8 12zM65 54.500c-1.500-4-.5-8 .8-11 1.300 3 2.300 7 .8 11z" fill="#3f6f28"/><path d="M98 56c-2-3-1-7 1-10 2 3 3 7 1 10z" fill="#47792b"/><path d="M11.500 56c0-9-4-12-7-16l1.500-1c3 3 6 6 6.500 10 .5-8 1-16 2-26l1.500-1-1 10c-1 8-1.500 15-1.500 24z" fill="#9a866e"/><path d="M14.500 32l12-13 1 1-12 14z" fill="#9a866e"/><g fill="#4f8a2b"><ellipse cx="11" cy="4" rx="8" ry="4.500"/><ellipse cx="27" cy="3.500" rx="9" ry="3.500"/><ellipse cx="40" cy="5" rx="6" ry="3"/><ellipse cx="19" cy="10" rx="6" ry="3.500"/><ellipse cx="33" cy="10" rx="5" ry="3"/><ellipse cx="9" cy="13" rx="4.500" ry="4"/><ellipse cx="25" cy="17" rx="6" ry="3.500"/><ellipse cx="13" cy="21" rx="4" ry="3"/><ellipse cx="36" cy="16" rx="3.500" ry="2.500"/><ellipse cx="3" cy="24" rx="3.500" ry="6"/><ellipse cx="9" cy="30" rx="3.500" ry="3"/><ellipse cx="4" cy="40" rx="3" ry="5"/><ellipse cx="44" cy="9" rx="3" ry="2"/></g><g fill="#86ba48"><ellipse cx="9" cy="3" rx="4.500" ry="2.500"/><ellipse cx="24" cy="2.500" rx="5" ry="2"/><ellipse cx="38" cy="4" rx="3.500" ry="1.800"/><ellipse cx="17" cy="9" rx="3.500" ry="2"/><ellipse cx="31" cy="9" rx="3" ry="1.800"/><ellipse cx="24" cy="16" rx="3.500" ry="2"/><ellipse cx="8" cy="12" rx="2.500" ry="2.200"/><ellipse cx="3" cy="22" rx="2" ry="3.500"/><ellipse cx="4" cy="50" rx="3.500" ry="4"/></g><ellipse cx="3" cy="62" rx="3.500" ry="4.500" fill="#9ab536"/></g><g transform="translate(7.5 7.2)"><rect x="0" y="0" width="107" height="67" fill="#cde3f2"/><rect x="0" y="10" width="107" height="12" fill="#dbeaf3"/><rect x="0" y="22" width="107" height="22" fill="#eef4f7"/><path d="M96 20c4-6 9-6 11-3v40h-9c-3-8-4-20-2-37z" fill="#4f8a2c"/><path d="M99 24c3-3 6-3 8 0v18h-8z" fill="#6aa43a"/><path d="M33 21l22-5 44 5v14H33z" fill="#f3f3f1"/><path d="M33 21l22-5 44 5v2.500l-44-4.500-22 4.500z" fill="#fbfbfa"/><rect x="29" y="23" width="5" height="11" fill="#e8e8e6"/><rect x="28" y="21.500" width="5" height="2" fill="#6b6b6b"/><path d="M36 27.500l9-2.500h44v9.500H36z" fill="#7b5a44"/><rect x="51.500" y="25.500" width="4.500" height="8.500" fill="#f1e9a2"/><rect x="77" y="26" width="7" height="7.500" fill="#efe27e"/><rect x="86" y="26.500" width="4.500" height="7" fill="#e9d978"/><rect x="39" y="28.500" width="3" height="5" fill="#d9a84e"/><rect x="44" y="27.500" width="3" height="6" fill="#c99646"/><rect x="70" y="25" width="2" height="9.500" fill="#5b4232"/><path d="M10 34.500h89v19H10z" fill="#f4f4f2"/><path d="M10 34.500h89v3H10z" fill="#ffffff"/><rect x="21" y="42" width="25" height="12" fill="#6a5b55"/><path d="M21 45h25M21 48h25M21 51h25" stroke="#5b4d48" stroke-width=".5"/><rect x="53" y="40" width="4.500" height="13" fill="#f0d76a"/><rect x="60" y="39.500" width="9" height="8" fill="#f4ea9a"/><rect x="70.500" y="40" width="2" height="13.500" fill="#7b5a44"/><rect x="60" y="47.500" width="9" height="6" fill="#e8e0b0"/><rect x="77" y="42.500" width="16" height="4.500" fill="#5a4a3a"/><rect x="78" y="43.300" width="14" height="3" fill="#f0d973"/><path d="M81.500 43.300v3M85 43.300v3M88.500 43.300v3" stroke="#7b5a44" stroke-width=".5"/><rect x="99" y="45" width="8" height="8" fill="#5d7f9c"/><path d="M0 54h107v13H0z" fill="#e4e2dc"/><path d="M0 57.500l16-1.500 24 11H0z" fill="#6a9e35"/><path d="M0 60l14-2 18 9H0z" fill="#7cae3e"/><path d="M88 55l12-1 7 2v3z" fill="#79a840"/><path d="M10 53.500h89v1.500H10z" fill="#b9b7b0"/><path d="M60.500 54c-1.500-4-.5-9 .8-12 1.300 3 2.300 8 .8 12zM65 54.500c-1.500-4-.5-8 .8-11 1.300 3 2.300 7 .8 11z" fill="#3f6f28"/><path d="M98 56c-2-3-1-7 1-10 2 3 3 7 1 10z" fill="#47792b"/><path d="M11.500 56c0-9-4-12-7-16l1.500-1c3 3 6 6 6.500 10 .5-8 1-16 2-26l1.500-1-1 10c-1 8-1.500 15-1.500 24z" fill="#9a866e"/><path d="M14.500 32l12-13 1 1-12 14z" fill="#9a866e"/><g fill="#4f8a2b"><ellipse cx="11" cy="4" rx="8" ry="4.500"/><ellipse cx="27" cy="3.500" rx="9" ry="3.500"/><ellipse cx="40" cy="5" rx="6" ry="3"/><ellipse cx="19" cy="10" rx="6" ry="3.500"/><ellipse cx="33" cy="10" rx="5" ry="3"/><ellipse cx="9" cy="13" rx="4.500" ry="4"/><ellipse cx="25" cy="17" rx="6" ry="3.500"/><ellipse cx="13" cy="21" rx="4" ry="3"/><ellipse cx="36" cy="16" rx="3.500" ry="2.500"/><ellipse cx="3" cy="24" rx="3.500" ry="6"/><ellipse cx="9" cy="30" rx="3.500" ry="3"/><ellipse cx="4" cy="40" rx="3" ry="5"/><ellipse cx="44" cy="9" rx="3" ry="2"/></g><g fill="#86ba48"><ellipse cx="9" cy="3" rx="4.500" ry="2.500"/><ellipse cx="24" cy="2.500" rx="5" ry="2"/><ellipse cx="38" cy="4" rx="3.500" ry="1.800"/><ellipse cx="17" cy="9" rx="3.500" ry="2"/><ellipse cx="31" cy="9" rx="3" ry="1.800"/><ellipse cx="24" cy="16" rx="3.500" ry="2"/><ellipse cx="8" cy="12" rx="2.500" ry="2.200"/><ellipse cx="3" cy="22" rx="2" ry="3.500"/><ellipse cx="4" cy="50" rx="3.500" ry="4"/></g><ellipse cx="3" cy="62" rx="3.500" ry="4.500" fill="#9ab536"/></g><rect y="0" width="122" height="7.500" fill="#cfe3ef"/><g fill="#4c8529"><ellipse cx="14" cy="5" rx="14" ry="7"/><ellipse cx="42" cy="4" rx="10" ry="5"/></g><rect y="74" width="122" height="8" fill="#e4e2dc"/><path d="M0 70h24l18 12H0z" fill="#6a9e35"/></svg>
<svg style="left:1104px;top:585px;overflow:hidden" width="122" height="82" viewBox="0 0 122 82"><rect width="122" height="82" fill="#cfe3ef"/><rect y="70" width="122" height="12" fill="#e4e2dc"/><g transform="translate(7.5 7.2)"><rect x="0" y="0" width="107" height="67" fill="#cde3f2"/><rect x="0" y="10" width="107" height="12" fill="#dbeaf3"/><rect x="0" y="22" width="107" height="22" fill="#eef4f7"/><path d="M96 20c4-6 9-6 11-3v40h-9c-3-8-4-20-2-37z" fill="#4f8a2c"/><path d="M99 24c3-3 6-3 8 0v18h-8z" fill="#6aa43a"/><path d="M33 21l22-5 44 5v14H33z" fill="#f3f3f1"/><path d="M33 21l22-5 44 5v2.500l-44-4.500-22 4.500z" fill="#fbfbfa"/><rect x="29" y="23" width="5" height="11" fill="#e8e8e6"/><rect x="28" y="21.500" width="5" height="2" fill="#6b6b6b"/><path d="M36 27.500l9-2.500h44v9.500H36z" fill="#7b5a44"/><rect x="51.500" y="25.500" width="4.500" height="8.500" fill="#f1e9a2"/><rect x="77" y="26" width="7" height="7.500" fill="#efe27e"/><rect x="86" y="26.500" width="4.500" height="7" fill="#e9d978"/><rect x="39" y="28.500" width="3" height="5" fill="#d9a84e"/><rect x="44" y="27.500" width="3" height="6" fill="#c99646"/><rect x="70" y="25" width="2" height="9.500" fill="#5b4232"/><path d="M10 34.500h89v19H10z" fill="#f4f4f2"/><path d="M10 34.500h89v3H10z" fill="#ffffff"/><rect x="21" y="42" width="25" height="12" fill="#6a5b55"/><path d="M21 45h25M21 48h25M21 51h25" stroke="#5b4d48" stroke-width=".5"/><rect x="53" y="40" width="4.500" height="13" fill="#f0d76a"/><rect x="60" y="39.500" width="9" height="8" fill="#f4ea9a"/><rect x="70.500" y="40" width="2" height="13.500" fill="#7b5a44"/><rect x="60" y="47.500" width="9" height="6" fill="#e8e0b0"/><rect x="77" y="42.500" width="16" height="4.500" fill="#5a4a3a"/><rect x="78" y="43.300" width="14" height="3" fill="#f0d973"/><path d="M81.500 43.300v3M85 43.300v3M88.500 43.300v3" stroke="#7b5a44" stroke-width=".5"/><rect x="99" y="45" width="8" height="8" fill="#5d7f9c"/><path d="M0 54h107v13H0z" fill="#e4e2dc"/><path d="M0 57.500l16-1.500 24 11H0z" fill="#6a9e35"/><path d="M0 60l14-2 18 9H0z" fill="#7cae3e"/><path d="M88 55l12-1 7 2v3z" fill="#79a840"/><path d="M10 53.500h89v1.500H10z" fill="#b9b7b0"/><path d="M60.500 54c-1.500-4-.5-9 .8-12 1.300 3 2.300 8 .8 12zM65 54.500c-1.500-4-.5-8 .8-11 1.300 3 2.300 7 .8 11z" fill="#3f6f28"/><path d="M98 56c-2-3-1-7 1-10 2 3 3 7 1 10z" fill="#47792b"/><path d="M11.500 56c0-9-4-12-7-16l1.500-1c3 3 6 6 6.500 10 .5-8 1-16 2-26l1.500-1-1 10c-1 8-1.500 15-1.500 24z" fill="#9a866e"/><path d="M14.500 32l12-13 1 1-12 14z" fill="#9a866e"/><g fill="#4f8a2b"><ellipse cx="11" cy="4" rx="8" ry="4.500"/><ellipse cx="27" cy="3.500" rx="9" ry="3.500"/><ellipse cx="40" cy="5" rx="6" ry="3"/><ellipse cx="19" cy="10" rx="6" ry="3.500"/><ellipse cx="33" cy="10" rx="5" ry="3"/><ellipse cx="9" cy="13" rx="4.500" ry="4"/><ellipse cx="25" cy="17" rx="6" ry="3.500"/><ellipse cx="13" cy="21" rx="4" ry="3"/><ellipse cx="36" cy="16" rx="3.500" ry="2.500"/><ellipse cx="3" cy="24" rx="3.500" ry="6"/><ellipse cx="9" cy="30" rx="3.500" ry="3"/><ellipse cx="4" cy="40" rx="3" ry="5"/><ellipse cx="44" cy="9" rx="3" ry="2"/></g><g fill="#86ba48"><ellipse cx="9" cy="3" rx="4.500" ry="2.500"/><ellipse cx="24" cy="2.500" rx="5" ry="2"/><ellipse cx="38" cy="4" rx="3.500" ry="1.800"/><ellipse cx="17" cy="9" rx="3.500" ry="2"/><ellipse cx="31" cy="9" rx="3" ry="1.800"/><ellipse cx="24" cy="16" rx="3.500" ry="2"/><ellipse cx="8" cy="12" rx="2.500" ry="2.200"/><ellipse cx="3" cy="22" rx="2" ry="3.500"/><ellipse cx="4" cy="50" rx="3.500" ry="4"/></g><ellipse cx="3" cy="62" rx="3.500" ry="4.500" fill="#9ab536"/></g><rect y="0" width="122" height="7.500" fill="#cfe3ef"/><rect x="0" y="0.0" width="14" height="4.1" fill="#3f7a22"/><rect x="0" y="3.9" width="14" height="4.1" fill="#5c9630"/><rect x="0" y="7.8" width="14" height="4.1" fill="#4a8526"/><rect x="0" y="11.7" width="14" height="4.1" fill="#6aa23a"/><rect x="0" y="15.6" width="14" height="4.1" fill="#3f7a22"/><rect x="0" y="19.5" width="14" height="4.1" fill="#578f2d"/><rect x="0" y="23.4" width="14" height="4.1" fill="#dfe9ee"/><rect x="0" y="27.3" width="14" height="4.1" fill="#4f8829"/><rect x="0" y="31.2" width="14" height="4.1" fill="#6fa53c"/><rect x="0" y="35.1" width="14" height="4.1" fill="#e9f0f3"/><rect x="0" y="39.0" width="14" height="4.1" fill="#44702a"/><rect x="0" y="43.0" width="14" height="4.1" fill="#f0f0ee"/><rect x="0" y="46.9" width="14" height="4.1" fill="#8a7258"/><rect x="0" y="50.8" width="14" height="4.1" fill="#eeeeec"/><rect x="0" y="54.7" width="14" height="4.1" fill="#f4f4f2"/><rect x="0" y="58.6" width="14" height="4.1" fill="#7aa53c"/><rect x="0" y="62.5" width="14" height="4.1" fill="#6a9e35"/><rect x="0" y="66.4" width="14" height="4.1" fill="#86b044"/><rect x="0" y="70.3" width="14" height="4.1" fill="#6a9e35"/><rect x="0" y="74.2" width="14" height="4.1" fill="#7cae3e"/><rect x="0" y="78.1" width="14" height="4.1" fill="#9ab536"/><rect x="14.0" y="0" width="3.600" height="8" fill="#3f7a22"/><rect x="17.5" y="0" width="3.600" height="8" fill="#5c9630"/><rect x="21.0" y="0" width="3.600" height="8" fill="#47802a"/><rect x="24.5" y="0" width="3.600" height="8" fill="#6aa23a"/><rect x="28.0" y="0" width="3.600" height="8" fill="#3f7a22"/><rect x="31.5" y="0" width="3.600" height="8" fill="#dfe9ee"/><rect x="35.0" y="0" width="3.600" height="8" fill="#5c9630"/><rect x="38.5" y="0" width="3.600" height="8" fill="#4a8526"/><rect x="42.0" y="0" width="3.600" height="8" fill="#cfe3ef"/><rect x="45.5" y="0" width="3.600" height="8" fill="#5c9630"/><rect x="49.0" y="0" width="3.600" height="8" fill="#cfe3ef"/><rect x="52.5" y="0" width="3.600" height="8" fill="#4a8526"/><rect x="108" y="0.0" width="14" height="4.1" fill="#cfe3ef"/><rect x="108" y="3.9" width="14" height="4.1" fill="#c9deeb"/><rect x="108" y="7.8" width="14" height="4.1" fill="#cfe3ef"/><rect x="108" y="11.7" width="14" height="4.1" fill="#d3e5f0"/><rect x="108" y="15.6" width="14" height="4.1" fill="#cfe3ef"/><rect x="108" y="19.5" width="14" height="4.1" fill="#5a9430"/><rect x="108" y="23.4" width="14" height="4.1" fill="#4f8a2c"/><rect x="108" y="27.3" width="14" height="4.1" fill="#6aa43a"/><rect x="108" y="31.2" width="14" height="4.1" fill="#4f8a2c"/><rect x="108" y="35.1" width="14" height="4.1" fill="#5f9a34"/><rect x="108" y="39.0" width="14" height="4.1" fill="#4a8428"/><rect x="108" y="43.0" width="14" height="4.1" fill="#63a038"/><rect x="108" y="46.9" width="14" height="4.1" fill="#5d7f9c"/><rect x="108" y="50.8" width="14" height="4.1" fill="#54902e"/><rect x="108" y="54.7" width="14" height="4.1" fill="#4f8a2c"/><rect x="108" y="58.6" width="14" height="4.1" fill="#79a840"/><rect x="108" y="62.5" width="14" height="4.1" fill="#dcdad3"/><rect x="108" y="66.4" width="14" height="4.1" fill="#dcdad3"/><rect x="108" y="70.3" width="14" height="4.1" fill="#d6d4cd"/><rect x="108" y="74.2" width="14" height="4.1" fill="#dcdad3"/><rect x="108" y="78.1" width="14" height="4.1" fill="#dcdad3"/><rect x="14" y="74" width="94" height="8" fill="#e4e2dc"/><rect x="0" y="74" width="52" height="8" fill="#7cae3e"/><rect x="0" y="70" width="14" height="12" fill="#9ab536"/></svg>
<!-- radio + apply -->
<div class="abs" style="left:951px;top:702px;width:18px;height:18px;border-radius:50%;border:1.500px solid #f5a50f"></div>
<div class="abs" style="left:1150px;top:702px;width:80px;height:28px;border-radius:14px;border:2px solid #416c85;background:#191f31"></div>
<span class="t" style="left:1174.1px;top:711.0px;font-size:12px;color:#e2e4ee;letter-spacing:0.07px;">Apply</span>
<!-- side scrollbar -->
<svg style="left:1252px;top:106px" width="12" height="687" viewBox="1252 106 12 687">
  <path d="M1254.500 116.500h5l-2.500-3.500z" fill="#2f465a"/>
  <rect x="1255" y="123" width="5" height="568" rx="2.500" fill="#36536a"/>
  <path d="M1254 780.500h5.500l-2.750 3.500z" fill="#2f465a"/>
</svg>
<div id="bottomedge" class="abs" style="left:0;top:792px;width:1266px;height:1px;background:#121318"></div>
<div id="leftedge" class="abs" style="left:0;top:31px;width:1px;height:762px;background:#2a2622"></div>
</body>
</html>
